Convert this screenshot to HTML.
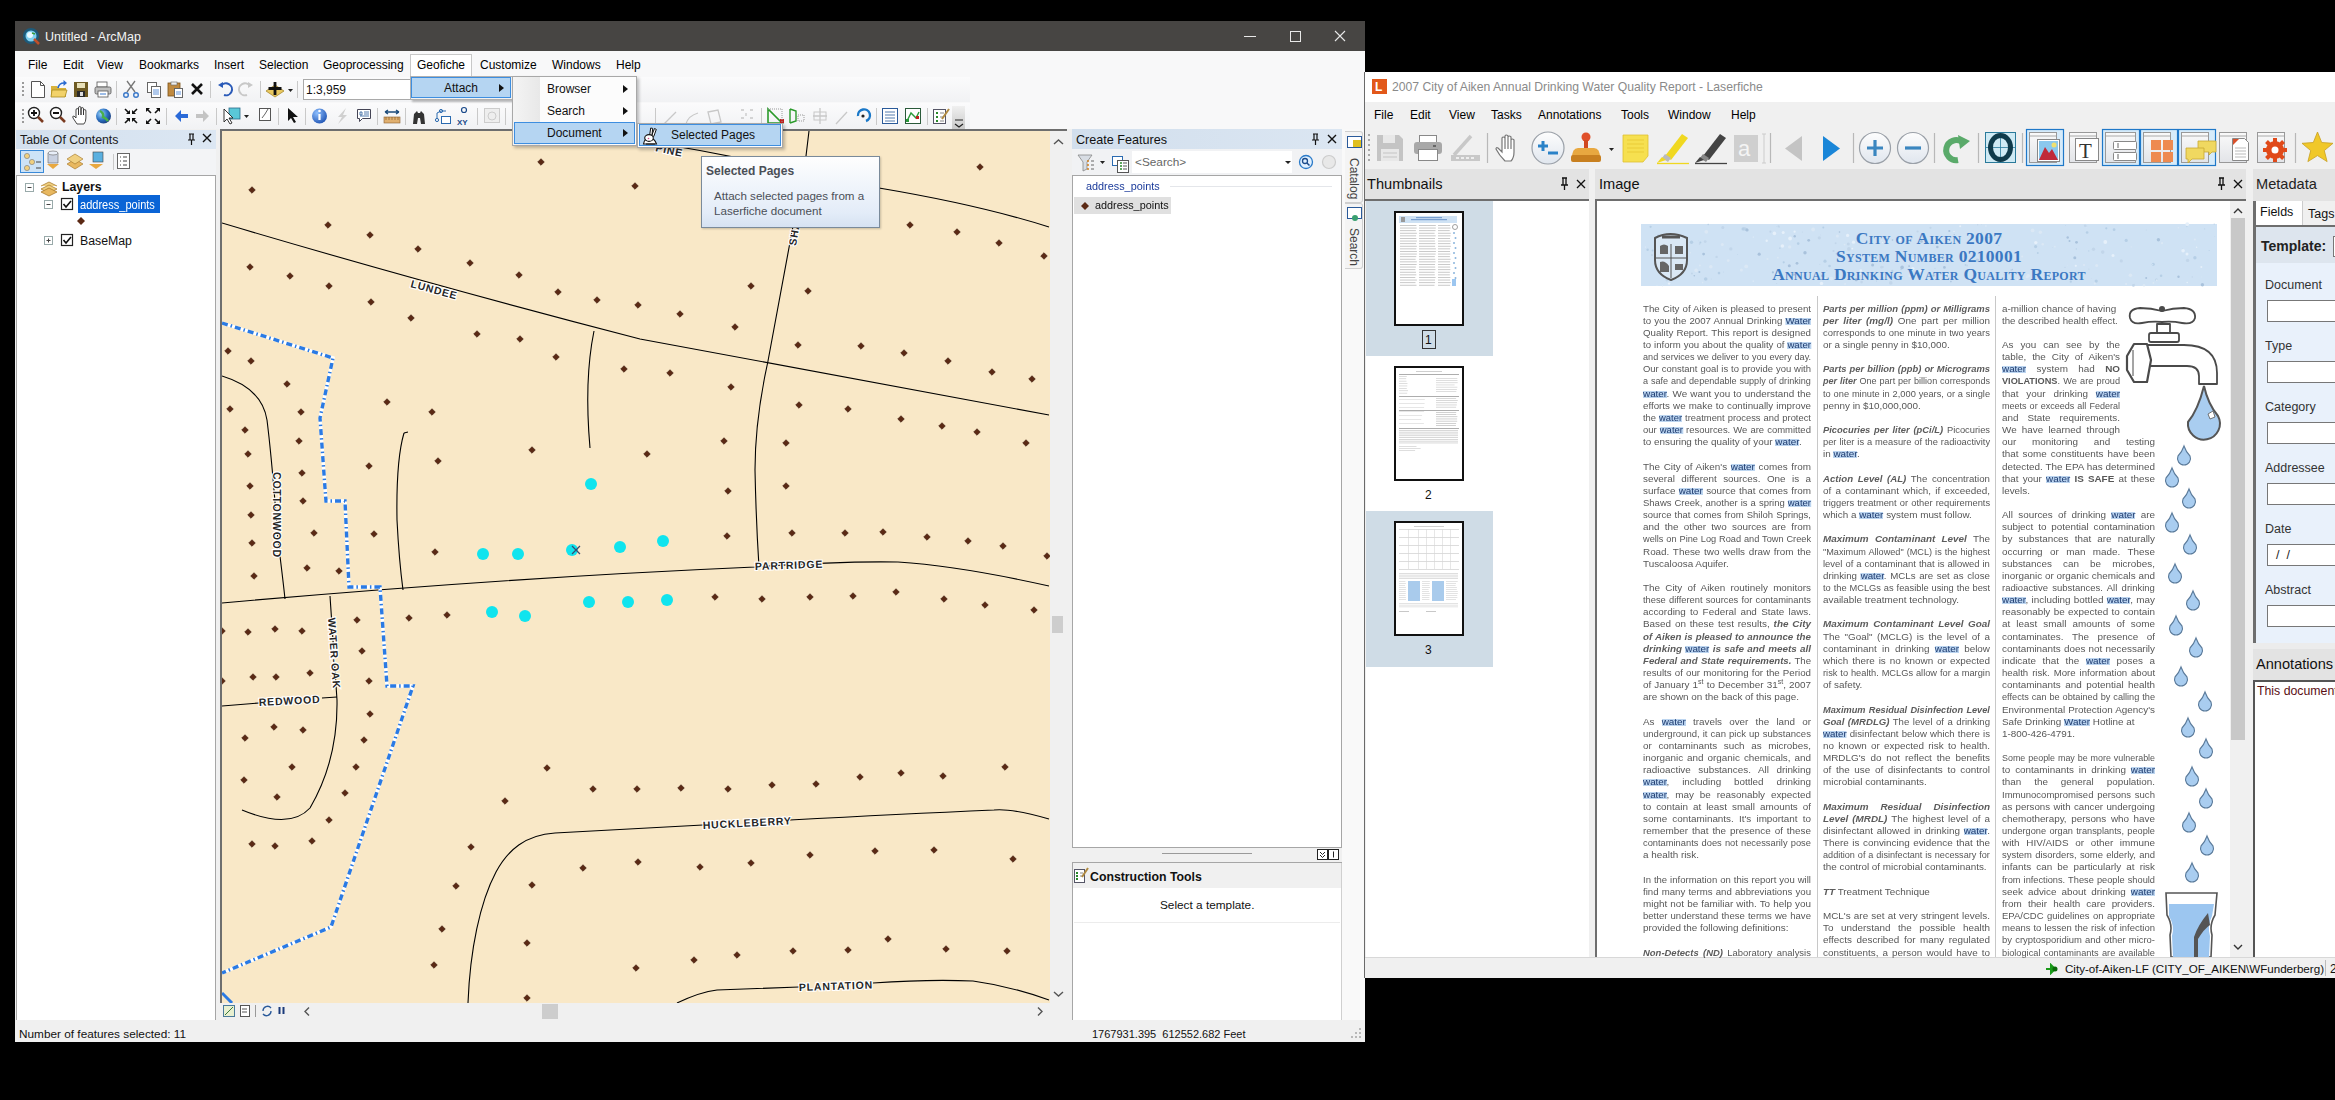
<!DOCTYPE html>
<html><head><meta charset="utf-8">
<style>
*{margin:0;padding:0;box-sizing:border-box}
html,body{width:2335px;height:1100px;overflow:hidden;background:#000;font-family:"Liberation Sans",sans-serif;position:relative}
.a{position:absolute}
.t{position:absolute;white-space:nowrap;font-size:12px;color:#000;line-height:1}
</style></head><body>
<!-- ============ ARCMAP WINDOW ============ -->
<div class="a" style="left:15px;top:21px;width:1350px;height:1021px;background:#f0f0f0"></div>
<div class="a" style="left:15px;top:21px;width:1350px;height:30px;background:#474543"></div>
<svg class="a" style="left:22px;top:27px" width="20" height="20" viewBox="0 0 20 20">
  <circle cx="9" cy="9" r="8" fill="#1d5a7a"/><circle cx="9" cy="9" r="5.5" fill="#7fd0f0"/><circle cx="8" cy="8" r="3" fill="#e8f8ff"/>
  <path d="M12,12 L17,17" stroke="#c0502a" stroke-width="2.5"/><path d="M10,6 l3,1" stroke="#3a9a3a" stroke-width="1.5"/>
</svg>
<div class="t" style="margin-top:1px;left:45px;top:30px;font-size:12.5px;color:#f4f4f4">Untitled - ArcMap</div>
<svg class="a" style="left:1230px;top:26px" width="130" height="20" viewBox="0 0 130 20">
  <path d="M14,10.5 H26" stroke="#e8e8e8" stroke-width="1"/>
  <rect x="60.5" y="5.5" width="10" height="10" fill="none" stroke="#e8e8e8" stroke-width="1"/>
  <path d="M105,5 L115,15 M115,5 L105,15" stroke="#e8e8e8" stroke-width="1.1"/>
</svg>
<!-- menu bar -->
<div class="a" style="left:15px;top:51px;width:1350px;height:25px;background:#f8f8f9"></div>
<div class="a" style="left:410px;top:54px;width:62px;height:23px;background:#fff;border:1px solid #c8c8c8;border-bottom:none"></div>
<div class="t" style="margin-top:1px;left:28px;top:58px">File</div>
<div class="t" style="margin-top:1px;left:63px;top:58px">Edit</div>
<div class="t" style="margin-top:1px;left:97px;top:58px">View</div>
<div class="t" style="margin-top:1px;left:139px;top:58px">Bookmarks</div>
<div class="t" style="margin-top:1px;left:214px;top:58px">Insert</div>
<div class="t" style="margin-top:1px;left:259px;top:58px">Selection</div>
<div class="t" style="margin-top:1px;left:323px;top:58px">Geoprocessing</div>
<div class="t" style="margin-top:1px;left:417px;top:58px">Geofiche</div>
<div class="t" style="margin-top:1px;left:480px;top:58px">Customize</div>
<div class="t" style="margin-top:1px;left:552px;top:58px">Windows</div>
<div class="t" style="margin-top:1px;left:616px;top:58px">Help</div>
<!-- toolbars -->
<div class="a" style="left:15px;top:76px;width:1350px;height:53px;background:#f8f8f9"></div><div class="a" style="left:15px;top:77px;width:955px;height:25px;background:linear-gradient(#fbfbfc,#f1f2f4)"></div><div class="a" style="left:15px;top:103px;width:955px;height:26px;background:linear-gradient(#fbfbfc,#f1f2f4)"></div>
<div class="a" style="left:303px;top:79px;width:110px;height:21px;background:#fff;border:1px solid #a9a9a9"></div>
<div class="t" style="margin-top:1px;left:306px;top:83px;font-size:12px;color:#111">1:3,959</div>
<div class="a" style="left:952px;top:106px;width:13px;height:24px;background:linear-gradient(#f0f0f0,#c8c8c8)"></div>

<div class="a" style="left:220px;top:129px;width:831px;height:875px;background:#f9e8c7;border-left:2px solid #6e6e6e;border-top:2px solid #6e6e6e"></div>
<!-- MAPSVG --><svg class="a" style="left:222px;top:131px" width="828" height="872" viewBox="222 131 828 872">
<g fill="none" stroke="#000" stroke-width="1.1">
<path d="M222,223 Q420,282 640,339 Q760,361 1049,415"/>
<path d="M594,331 Q584,380 590,448"/>
<path d="M809,131 L806,156 Q790,240 768,361 Q755,420 755,470 Q756,520 759,567"/>
<path d="M640,140 Q760,160 879,188 Q980,205 1049,227"/>
<path d="M222,603 Q500,578 755,567 Q840,561 898,562 Q960,566 1049,586"/>
<path d="M222,376 Q262,388 267,420 Q272,460 278,540 Q283,580 285,599"/>
<path d="M404,433 L408,432 M404,433 Q396,460 397,520 Q399,560 403,590"/>
<path d="M330,596 L337,700 Q338,760 310,808 Q290,830 242,810"/>
<path d="M222,706 L259,703 M322,698 L337,697"/>
<path d="M1049,819 Q1010,808 994,810 Q900,814 790,820 M703,825 L555,833 C525,835 508,850 496,872 C480,902 470,950 468,1003"/>
<path d="M677,1003 Q700,992 717,990 L799,987 M873,983 Q930,979 973,981 Q1010,986 1049,1000"/>
</g>
<g fill="none">
<path d="M222,323 L333,358 L320,418 L325,488 L326,501 L345,501 L349,587 L380,587 L387,686 L413,686 L331,927 L222,973" stroke="#fff" stroke-width="3.4"/>
<path d="M222,323 L333,358 L320,418 L325,488 L326,501 L345,501 L349,587 L380,587 L387,686 L413,686 L331,927 L222,973" stroke="#2a7ae4" stroke-width="3.4" stroke-dasharray="6 3 1.5 3"/>
<path d="M222,993 L232,1003" stroke="#2a7ae4" stroke-width="3"/>
</g>
<path d="M252,186.7l3.3,3.3l-3.3,3.3l-3.3,-3.3zM541,158.7l3.3,3.3l-3.3,3.3l-3.3,-3.3zM635,182.7l3.3,3.3l-3.3,3.3l-3.3,-3.3zM328,221.7l3.3,3.3l-3.3,3.3l-3.3,-3.3zM370,231.7l3.3,3.3l-3.3,3.3l-3.3,-3.3zM418,245.7l3.3,3.3l-3.3,3.3l-3.3,-3.3zM470,259.7l3.3,3.3l-3.3,3.3l-3.3,-3.3zM519,271.7l3.3,3.3l-3.3,3.3l-3.3,-3.3zM250,263.7l3.3,3.3l-3.3,3.3l-3.3,-3.3zM290,272.7l3.3,3.3l-3.3,3.3l-3.3,-3.3zM329,282.7l3.3,3.3l-3.3,3.3l-3.3,-3.3zM371,298.7l3.3,3.3l-3.3,3.3l-3.3,-3.3zM411,314.7l3.3,3.3l-3.3,3.3l-3.3,-3.3zM558,288.7l3.3,3.3l-3.3,3.3l-3.3,-3.3zM597,296.7l3.3,3.3l-3.3,3.3l-3.3,-3.3zM638,301.7l3.3,3.3l-3.3,3.3l-3.3,-3.3zM477,330.7l3.3,3.3l-3.3,3.3l-3.3,-3.3zM520,335.7l3.3,3.3l-3.3,3.3l-3.3,-3.3zM556,353.7l3.3,3.3l-3.3,3.3l-3.3,-3.3zM624,365.7l3.3,3.3l-3.3,3.3l-3.3,-3.3zM228,347.7l3.3,3.3l-3.3,3.3l-3.3,-3.3zM251,357.7l3.3,3.3l-3.3,3.3l-3.3,-3.3zM287,380.7l3.3,3.3l-3.3,3.3l-3.3,-3.3zM230,405.7l3.3,3.3l-3.3,3.3l-3.3,-3.3zM301,408.7l3.3,3.3l-3.3,3.3l-3.3,-3.3zM387,398.7l3.3,3.3l-3.3,3.3l-3.3,-3.3zM432,408.7l3.3,3.3l-3.3,3.3l-3.3,-3.3zM980,163.7l3.3,3.3l-3.3,3.3l-3.3,-3.3zM910,221.7l3.3,3.3l-3.3,3.3l-3.3,-3.3zM957,228.7l3.3,3.3l-3.3,3.3l-3.3,-3.3zM999,239.7l3.3,3.3l-3.3,3.3l-3.3,-3.3zM1044,252.7l3.3,3.3l-3.3,3.3l-3.3,-3.3zM751,282.7l3.3,3.3l-3.3,3.3l-3.3,-3.3zM808,287.7l3.3,3.3l-3.3,3.3l-3.3,-3.3zM680,310.7l3.3,3.3l-3.3,3.3l-3.3,-3.3zM735,323.7l3.3,3.3l-3.3,3.3l-3.3,-3.3zM798,341.7l3.3,3.3l-3.3,3.3l-3.3,-3.3zM861,342.7l3.3,3.3l-3.3,3.3l-3.3,-3.3zM904,349.7l3.3,3.3l-3.3,3.3l-3.3,-3.3zM948,357.7l3.3,3.3l-3.3,3.3l-3.3,-3.3zM992,368.7l3.3,3.3l-3.3,3.3l-3.3,-3.3zM1032,375.7l3.3,3.3l-3.3,3.3l-3.3,-3.3zM670,369.7l3.3,3.3l-3.3,3.3l-3.3,-3.3zM731,383.7l3.3,3.3l-3.3,3.3l-3.3,-3.3zM799,401.7l3.3,3.3l-3.3,3.3l-3.3,-3.3zM848,405.7l3.3,3.3l-3.3,3.3l-3.3,-3.3zM901,415.7l3.3,3.3l-3.3,3.3l-3.3,-3.3zM245,426.7l3.3,3.3l-3.3,3.3l-3.3,-3.3zM299,437.7l3.3,3.3l-3.3,3.3l-3.3,-3.3zM248,450.7l3.3,3.3l-3.3,3.3l-3.3,-3.3zM369,462.7l3.3,3.3l-3.3,3.3l-3.3,-3.3zM438,457.7l3.3,3.3l-3.3,3.3l-3.3,-3.3zM532,446.7l3.3,3.3l-3.3,3.3l-3.3,-3.3zM302,469.7l3.3,3.3l-3.3,3.3l-3.3,-3.3zM250,482.7l3.3,3.3l-3.3,3.3l-3.3,-3.3zM303,497.7l3.3,3.3l-3.3,3.3l-3.3,-3.3zM251,511.7l3.3,3.3l-3.3,3.3l-3.3,-3.3zM314,529.7l3.3,3.3l-3.3,3.3l-3.3,-3.3zM374,530.7l3.3,3.3l-3.3,3.3l-3.3,-3.3zM252,539.7l3.3,3.3l-3.3,3.3l-3.3,-3.3zM435,548.7l3.3,3.3l-3.3,3.3l-3.3,-3.3zM254,572.7l3.3,3.3l-3.3,3.3l-3.3,-3.3zM307,564.7l3.3,3.3l-3.3,3.3l-3.3,-3.3zM339,567.7l3.3,3.3l-3.3,3.3l-3.3,-3.3zM357,616.7l3.3,3.3l-3.3,3.3l-3.3,-3.3zM409,614.7l3.3,3.3l-3.3,3.3l-3.3,-3.3zM447,611.7l3.3,3.3l-3.3,3.3l-3.3,-3.3zM222,627.7l3.3,3.3l-3.3,3.3l-3.3,-3.3zM248,628.7l3.3,3.3l-3.3,3.3l-3.3,-3.3zM275,625.7l3.3,3.3l-3.3,3.3l-3.3,-3.3zM302,627.7l3.3,3.3l-3.3,3.3l-3.3,-3.3zM362,647.7l3.3,3.3l-3.3,3.3l-3.3,-3.3zM253,673.7l3.3,3.3l-3.3,3.3l-3.3,-3.3zM276,673.7l3.3,3.3l-3.3,3.3l-3.3,-3.3zM310,669.7l3.3,3.3l-3.3,3.3l-3.3,-3.3zM369,677.7l3.3,3.3l-3.3,3.3l-3.3,-3.3zM222,677.7l3.3,3.3l-3.3,3.3l-3.3,-3.3zM942,422.7l3.3,3.3l-3.3,3.3l-3.3,-3.3zM977,428.7l3.3,3.3l-3.3,3.3l-3.3,-3.3zM1026,439.7l3.3,3.3l-3.3,3.3l-3.3,-3.3zM647,450.7l3.3,3.3l-3.3,3.3l-3.3,-3.3zM724,437.7l3.3,3.3l-3.3,3.3l-3.3,-3.3zM786,439.7l3.3,3.3l-3.3,3.3l-3.3,-3.3zM728,487.7l3.3,3.3l-3.3,3.3l-3.3,-3.3zM786,482.7l3.3,3.3l-3.3,3.3l-3.3,-3.3zM727,532.7l3.3,3.3l-3.3,3.3l-3.3,-3.3zM792,529.7l3.3,3.3l-3.3,3.3l-3.3,-3.3zM845,529.7l3.3,3.3l-3.3,3.3l-3.3,-3.3zM883,528.7l3.3,3.3l-3.3,3.3l-3.3,-3.3zM927,533.7l3.3,3.3l-3.3,3.3l-3.3,-3.3zM968,537.7l3.3,3.3l-3.3,3.3l-3.3,-3.3zM1003,542.7l3.3,3.3l-3.3,3.3l-3.3,-3.3zM1047,552.7l3.3,3.3l-3.3,3.3l-3.3,-3.3zM715,593.7l3.3,3.3l-3.3,3.3l-3.3,-3.3zM762,595.7l3.3,3.3l-3.3,3.3l-3.3,-3.3zM810,593.7l3.3,3.3l-3.3,3.3l-3.3,-3.3zM853,592.7l3.3,3.3l-3.3,3.3l-3.3,-3.3zM896,588.7l3.3,3.3l-3.3,3.3l-3.3,-3.3zM944,595.7l3.3,3.3l-3.3,3.3l-3.3,-3.3zM985,601.7l3.3,3.3l-3.3,3.3l-3.3,-3.3zM1034,606.7l3.3,3.3l-3.3,3.3l-3.3,-3.3zM370,710.7l3.3,3.3l-3.3,3.3l-3.3,-3.3zM274,723.7l3.3,3.3l-3.3,3.3l-3.3,-3.3zM303,726.7l3.3,3.3l-3.3,3.3l-3.3,-3.3zM245,734.7l3.3,3.3l-3.3,3.3l-3.3,-3.3zM364,736.7l3.3,3.3l-3.3,3.3l-3.3,-3.3zM292,763.7l3.3,3.3l-3.3,3.3l-3.3,-3.3zM356,763.7l3.3,3.3l-3.3,3.3l-3.3,-3.3zM244,776.7l3.3,3.3l-3.3,3.3l-3.3,-3.3zM277,793.7l3.3,3.3l-3.3,3.3l-3.3,-3.3zM345,789.7l3.3,3.3l-3.3,3.3l-3.3,-3.3zM329,816.7l3.3,3.3l-3.3,3.3l-3.3,-3.3zM252,840.7l3.3,3.3l-3.3,3.3l-3.3,-3.3zM275,842.7l3.3,3.3l-3.3,3.3l-3.3,-3.3zM312,837.7l3.3,3.3l-3.3,3.3l-3.3,-3.3zM547,764.7l3.3,3.3l-3.3,3.3l-3.3,-3.3zM593,785.7l3.3,3.3l-3.3,3.3l-3.3,-3.3zM637,785.7l3.3,3.3l-3.3,3.3l-3.3,-3.3zM505,797.7l3.3,3.3l-3.3,3.3l-3.3,-3.3zM471,843.7l3.3,3.3l-3.3,3.3l-3.3,-3.3zM583,864.7l3.3,3.3l-3.3,3.3l-3.3,-3.3zM638,858.7l3.3,3.3l-3.3,3.3l-3.3,-3.3zM532,881.7l3.3,3.3l-3.3,3.3l-3.3,-3.3zM456,882.7l3.3,3.3l-3.3,3.3l-3.3,-3.3zM442,925.7l3.3,3.3l-3.3,3.3l-3.3,-3.3zM527,939.7l3.3,3.3l-3.3,3.3l-3.3,-3.3zM434,961.7l3.3,3.3l-3.3,3.3l-3.3,-3.3zM636,964.7l3.3,3.3l-3.3,3.3l-3.3,-3.3zM527,994.7l3.3,3.3l-3.3,3.3l-3.3,-3.3zM681,784.7l3.3,3.3l-3.3,3.3l-3.3,-3.3zM728,785.7l3.3,3.3l-3.3,3.3l-3.3,-3.3zM772,781.7l3.3,3.3l-3.3,3.3l-3.3,-3.3zM816,780.7l3.3,3.3l-3.3,3.3l-3.3,-3.3zM860,773.7l3.3,3.3l-3.3,3.3l-3.3,-3.3zM901,769.7l3.3,3.3l-3.3,3.3l-3.3,-3.3zM943,772.7l3.3,3.3l-3.3,3.3l-3.3,-3.3zM1005,763.7l3.3,3.3l-3.3,3.3l-3.3,-3.3zM700,863.7l3.3,3.3l-3.3,3.3l-3.3,-3.3zM751,859.7l3.3,3.3l-3.3,3.3l-3.3,-3.3zM810,851.7l3.3,3.3l-3.3,3.3l-3.3,-3.3zM875,847.7l3.3,3.3l-3.3,3.3l-3.3,-3.3zM934,846.7l3.3,3.3l-3.3,3.3l-3.3,-3.3zM1013,855.7l3.3,3.3l-3.3,3.3l-3.3,-3.3zM694,956.7l3.3,3.3l-3.3,3.3l-3.3,-3.3zM737,951.7l3.3,3.3l-3.3,3.3l-3.3,-3.3zM793,947.7l3.3,3.3l-3.3,3.3l-3.3,-3.3zM848,946.7l3.3,3.3l-3.3,3.3l-3.3,-3.3zM888,935.7l3.3,3.3l-3.3,3.3l-3.3,-3.3zM946,945.7l3.3,3.3l-3.3,3.3l-3.3,-3.3zM1007,947.7l3.3,3.3l-3.3,3.3l-3.3,-3.3z" fill="#5b2914" stroke="#3a1a0c" stroke-width="0.6"/>
<g fill="#10e4ee"><circle cx="591" cy="484" r="6"/><circle cx="483" cy="554" r="6"/><circle cx="518" cy="554" r="6"/><circle cx="572" cy="550" r="6"/><circle cx="620" cy="547" r="6"/><circle cx="663" cy="541" r="6"/><circle cx="492" cy="612" r="6"/><circle cx="525" cy="616" r="6"/><circle cx="589" cy="602" r="6"/><circle cx="628" cy="602" r="6"/><circle cx="667" cy="600" r="6"/></g>

<path d="M572,546 l8,8 m0,-8 l-8,8" stroke="#3a4a70" stroke-width="1.2"/>
<g font-family="Liberation Sans" font-size="10.5" font-weight="bold" fill="#262626" stroke="#fff" stroke-width="2.2" paint-order="stroke" letter-spacing="0.8">
<text transform="translate(410,287) rotate(15)">LUNDEE</text>
<text transform="translate(755,570) rotate(-2)">PARTRIDGE</text>
<text transform="translate(703,829) rotate(-3)">HUCKLEBERRY</text>
<text transform="translate(799,991) rotate(-2)">PLANTATION</text>
<text transform="translate(259,706) rotate(-3)">REDWOOD</text>
<text transform="translate(273,472) rotate(90)">COTTONWOOD</text>
<text transform="translate(328,618) rotate(86)">WATER-OAK</text>
<text transform="translate(796,246) rotate(-80)">SHA</text>
<text transform="translate(655,151) rotate(12)">PINE</text>
</g>
</svg><!-- /MAPSVG -->
<!-- TOC -->
<div class="a" style="left:16px;top:130px;width:200px;height:19px;background:linear-gradient(90deg,#d3e0ee,#dce7f3)"></div>
<div class="t" style="margin-top:1px;left:20px;top:133px;font-size:12.3px;color:#1a1a1a">Table Of Contents</div>
<svg class="a" style="left:184px;top:131px" width="30" height="16" viewBox="0 0 30 16"><path d="M5,3h5M6,3v6M9,3v6M4,9h7M7.5,9v5" stroke="#111" stroke-width="1.2" fill="none"/><path d="M19,3l8,8M27,3l-8,8" stroke="#111" stroke-width="1.4"/></svg>
<div class="a" style="left:16px;top:149px;width:200px;height:26px;background:#f3f4f6"></div>
<div class="a" style="left:16px;top:175px;width:200px;height:846px;background:#fff;border:1px solid #a6a6a6"></div>
<svg class="a" style="left:20px;top:178px" width="120" height="70" viewBox="0 0 120 70">
 <rect x="5.5" y="5.5" width="8" height="8" fill="#fff" stroke="#9aa"/><path d="M7.5,9.5h4" stroke="#444"/>
 <path d="M21,11l8,-4l8,4l-8,4z M21,8l8,-4l8,4" fill="#f0d080" stroke="#a07020" stroke-width="0.7"/><path d="M21,14l8,-4l8,4l-8,4z" fill="#e8b860" stroke="#a07020" stroke-width="0.7"/>
 <rect x="24.5" y="22.5" width="8" height="8" fill="#fff" stroke="#9aa"/><path d="M26.5,26.5h4" stroke="#444"/>
 <rect x="41.5" y="20.5" width="11" height="11" fill="#fff" stroke="#222" stroke-width="1.2"/><path d="M43.5,26l2.5,3l5,-6" stroke="#111" stroke-width="1.6" fill="none"/>
 <path d="M61,39l4,4l-4,4l-4,-4z" fill="#5b2914"/>
 <rect x="24.5" y="58.5" width="8" height="8" fill="#fff" stroke="#9aa"/><path d="M26.5,62.5h4M28.5,60.5v4" stroke="#444"/>
 <rect x="41.5" y="56.5" width="11" height="11" fill="#fff" stroke="#222" stroke-width="1.2"/><path d="M43.5,62l2.5,3l5,-6" stroke="#111" stroke-width="1.6" fill="none"/>
</svg>
<div class="t" style="margin-top:1px;left:62px;top:180px;font-size:12.3px;font-weight:bold;color:#111">Layers</div>
<div class="a" style="left:78px;top:195px;width:82px;height:18px;background:#0a64d6"></div>
<div class="t" style="margin-top:1px;left:80px;top:198px;font-size:12px;color:#fff;transform:scaleX(0.92);transform-origin:0 0">address_points</div>
<div class="t" style="margin-top:1px;left:80px;top:234px;font-size:12.3px;color:#111">BaseMap</div>

<!-- map scrollbars -->
<div class="a" style="left:1050px;top:129px;width:17px;height:875px;background:#f0f0f0;border-top:2px solid #6e6e6e"></div>
<div class="a" style="left:1052px;top:616px;width:11px;height:17px;background:#cdcdcd"></div>
<svg class="a" style="left:1050px;top:132px" width="17" height="872" viewBox="0 0 17 872"><path d="M4,12l4.5,-4l4.5,4" fill="none" stroke="#555" stroke-width="1.4"/><path d="M4,860l4.5,4l4.5,-4" fill="none" stroke="#555" stroke-width="1.4"/></svg>
<div class="a" style="left:220px;top:1003px;width:847px;height:17px;background:#f0f0f0"></div>
<div class="a" style="left:542px;top:1004px;width:16px;height:15px;background:#cdcdcd"></div>
<svg class="a" style="left:220px;top:1003px" width="847" height="17" viewBox="0 0 847 17">
 <rect x="3.5" y="2.5" width="11" height="11" fill="#e8f0d0" stroke="#4a7a9a"/><path d="M5,12l8,-8" stroke="#3a7a3a"/>
 <rect x="20.5" y="2.5" width="9" height="11" fill="#fff" stroke="#555"/><path d="M22,6h5M22,9h5" stroke="#555"/>
 <path d="M35.5,2V14" stroke="#999"/>
 <path d="M43,8a4.5,4.5 0 0 1 8,-3 M51,8a4.5,4.5 0 0 1 -8,3" fill="none" stroke="#2a5a9a" stroke-width="1.3"/>
 <path d="M59.5,4v7M63.5,4v7" stroke="#1a3a7a" stroke-width="2"/>
 <path d="M89,4.5l-4,4l4,4" fill="none" stroke="#555" stroke-width="1.4"/>
 <path d="M818,4.5l4,4l-4,4" fill="none" stroke="#555" stroke-width="1.4"/>
</svg>

<!-- status bar -->
<div class="a" style="left:15px;top:1020px;width:1350px;height:22px;background:#f0f0f0"></div>
<div class="t" style="margin-top:1px;left:19px;top:1028px;font-size:11.8px;color:#111">Number of features selected: 11</div>
<div class="t" style="margin-top:1px;left:1092px;top:1028px;font-size:11px;color:#111">1767931.395&nbsp; 612552.682 Feet</div>

<!-- Create features -->
<div class="a" style="left:1072px;top:129px;width:270px;height:20px;background:linear-gradient(90deg,#d2dfed,#dbe6f2)"></div>
<div class="t" style="margin-top:1px;left:1076px;top:133px;font-size:12.6px;color:#111">Create Features</div>
<svg class="a" style="left:1308px;top:131px" width="34" height="16" viewBox="0 0 34 16"><path d="M5,3h5M6,3v6M9,3v6M4,9h7M7.5,9v5" stroke="#111" stroke-width="1.2" fill="none"/><path d="M20,4l8,8M28,4l-8,8" stroke="#111" stroke-width="1.4"/></svg>
<div class="a" style="left:1072px;top:149px;width:270px;height:27px;background:#f1f2f4"></div>
<div class="a" style="left:1132px;top:151px;width:160px;height:22px;background:#fff"></div>
<svg class="a" style="left:1072px;top:149px" width="270" height="27" viewBox="0 0 270 27">
 <path d="M6,6h14l-5,7v7l-4,2v-9z" fill="#d8dde4" stroke="#888" stroke-width="0.8"/><path d="M15,12h2M15,16h2M15,20h2" stroke="#d08020" stroke-width="1.5"/><path d="M19,12h3M19,16h3M19,20h3" stroke="#666"/>
 <path d="M28,12h5l-2.5,3z" fill="#222"/>
 <rect x="40.5" y="7.5" width="10" height="9" fill="#fff" stroke="#2a6ab0"/><rect x="45.5" y="11.5" width="11" height="12" fill="#fff" stroke="#555"/><path d="M48,14h2M48,17h2M48,20h2" stroke="#2a8a2a" stroke-width="1.3"/><path d="M51,14h4M51,17h4M51,20h4" stroke="#555"/>
 <path d="M213,12h6l-3,3z" fill="#222"/>
 <circle cx="234" cy="13" r="6.5" fill="#e0f0ff" stroke="#2a7ac8" stroke-width="1.3"/><circle cx="233" cy="12" r="2.5" fill="none" stroke="#1a4a8a" stroke-width="1.3"/><path d="M235,14l2.5,2.5" stroke="#1a4a8a" stroke-width="1.5"/>
 <circle cx="257" cy="13" r="6.5" fill="#e8e8e8" stroke="#ccc" stroke-width="1.2"/>
</svg>
<div class="t" style="margin-top:1px;left:1135px;top:156px;font-size:11.8px;color:#666">&lt;Search&gt;</div>
<div class="a" style="left:1072px;top:175px;width:270px;height:673px;background:#fff;border:1px solid #a6a6a6"></div>
<div class="t" style="margin-top:1px;left:1086px;top:180px;font-size:11.8px;color:#1a3a9a;transform:scaleX(0.92);transform-origin:0 0">address_points</div>
<div class="a" style="left:1170px;top:186px;width:162px;height:1px;background:#e4e6ea"></div>
<div class="a" style="left:1074px;top:197px;width:97px;height:17px;background:#e0e0e0"></div>
<svg class="a" style="left:1080px;top:201px" width="10" height="10" viewBox="0 0 10 10"><path d="M5,1l4,4l-4,4l-4,-4z" fill="#5b2914"/></svg>
<div class="t" style="margin-top:1px;left:1095px;top:199px;font-size:11.8px;color:#111;transform:scaleX(0.92);transform-origin:0 0">address_points</div>
<!-- splitter -->
<div class="a" style="left:1072px;top:848px;width:270px;height:18px;background:#f0f0f0"></div>
<div class="a" style="left:1162px;top:853px;width:90px;height:1px;background:#9a9a9a"></div>
<svg class="a" style="left:1316px;top:847px" width="26" height="14" viewBox="0 0 26 14"><rect x="1.5" y="2.5" width="10" height="10" fill="#fff" stroke="#222"/><path d="M4,5l2.5,2.5l2.5,-2.5M4,8l2.5,2.5l2.5,-2.5" fill="none" stroke="#222"/><rect x="12.5" y="2.5" width="10" height="10" fill="#fff" stroke="#222"/><path d="M17.5,4.5v6" stroke="#222"/></svg>
<div class="a" style="left:1072px;top:862px;width:270px;height:158px;background:#fff;border-left:1px solid #a6a6a6;border-right:1px solid #d0d0d0"></div>
<div class="a" style="left:1072px;top:862px;width:270px;height:1px;background:#a6a6a6"></div><div class="a" style="left:1073px;top:863px;width:268px;height:25px;background:#f0f0f0"></div>
<svg class="a" style="left:1073px;top:866px" width="16" height="18" viewBox="0 0 16 18"><rect x="1.5" y="3.5" width="10" height="13" fill="#fff" stroke="#556"/><path d="M3,7h2M3,10h2M3,13h2" stroke="#2a8a2a" stroke-width="2"/><path d="M7,7h3M7,10h3" stroke="#888"/><path d="M9,11l6,-9" stroke="#b08a40" stroke-width="2"/></svg>
<div class="t" style="margin-top:1px;left:1090px;top:870px;font-size:12.3px;font-weight:bold;color:#111">Construction Tools</div>
<div class="a" style="left:1074px;top:922px;width:266px;height:1px;background:#ececec"></div>
<div class="t" style="margin-top:1px;left:1160px;top:899px;font-size:11.8px;color:#111">Select a template.</div>
<!-- side tabs -->
<div class="a" style="left:1342px;top:129px;width:23px;height:891px;background:#f9f9f9"></div>
<div class="a" style="left:1345px;top:131px;width:18px;height:72px;background:#f4f4f4;border:1px solid #cfcfcf;border-left:none;border-radius:0 3px 3px 0"></div>
<div class="a" style="left:1345px;top:203px;width:18px;height:66px;background:#f4f4f4;border:1px solid #cfcfcf;border-left:none;border-radius:0 3px 3px 0"></div>
<svg class="a" style="left:1345px;top:131px" width="20" height="140" viewBox="0 0 20 140">
 <rect x="2.5" y="5.5" width="14" height="11" fill="#fff" stroke="#2a5a9a"/><rect x="8" y="9" width="8" height="7" fill="#e0c020"/>
 <text transform="translate(5,27) rotate(90)" font-family="Liberation Sans" font-size="12" fill="#444">Catalog</text>
 <rect x="2.5" y="76.5" width="14" height="11" fill="#fff" stroke="#2a5a9a"/><circle cx="10" cy="87" r="3" fill="#3aa070"/>
 <text transform="translate(5,97) rotate(90)" font-family="Liberation Sans" font-size="12" fill="#444">Search</text>
</svg>

<svg class="a" style="left:1350px;top:1027px" width="12" height="12" viewBox="0 0 12 12"><g fill="#b8b8b8"><rect x="9" y="1" width="2" height="2"/><rect x="5" y="5" width="2" height="2"/><rect x="9" y="5" width="2" height="2"/><rect x="1" y="9" width="2" height="2"/><rect x="5" y="9" width="2" height="2"/><rect x="9" y="9" width="2" height="2"/></g></svg>

<svg class="a" style="left:0;top:0" width="1070" height="180" viewBox="0 0 1070 180">
<defs>
 <radialGradient id="glb" cx="0.35" cy="0.35" r="0.7"><stop offset="0" stop-color="#9fd6ff"/><stop offset="0.6" stop-color="#2a6fc0"/><stop offset="1" stop-color="#1a3f80"/></radialGradient>
 <radialGradient id="inf" cx="0.35" cy="0.3" r="0.8"><stop offset="0" stop-color="#8fc0ff"/><stop offset="1" stop-color="#1a4fb0"/></radialGradient>
</defs>
<!-- grips -->
<g fill="#9a9a9a"><rect x="22" y="82" width="2" height="2"/><rect x="22" y="86" width="2" height="2"/><rect x="22" y="90" width="2" height="2"/><rect x="22" y="94" width="2" height="2"/>
<rect x="22" y="109" width="2" height="2"/><rect x="22" y="113" width="2" height="2"/><rect x="22" y="117" width="2" height="2"/><rect x="22" y="121" width="2" height="2"/></g>
<!-- separators -->
<g stroke="#c9c9c9" stroke-width="1">
<path d="M116.5,81V98 M210.5,81V98 M260.5,81V98 M297.5,81V98"/>
<path d="M116.5,108V125 M166.5,108V125 M216.5,108V125 M278.5,108V125 M305.5,108V125 M377.5,108V125 M405.5,108V125 M477.5,108V125 M505.5,108V125 M655.5,108V125 M761.5,108V125 M876.5,108V125 M927.5,108V125"/>
</g>
<!-- ROW 1 -->
<path d="M31.5,81.5h9l4,4v12h-13z" fill="#fff" stroke="#555" stroke-width="1"/><path d="M40.5,81.5v4h4" fill="none" stroke="#555"/>
<path d="M51,86h6l2,2h7v9h-15z" fill="#d8b23a"/><path d="M52,90h15l-2,7h-14z" fill="#f2d26a" stroke="#a88a20" stroke-width="0.8"/><path d="M58,88q1,-5 6,-5" fill="none" stroke="#2a6ad0" stroke-width="1.6"/><path d="M67,83l-3.5,-3v6z" fill="#2a6ad0"/>
<rect x="74" y="82" width="14" height="15" fill="#6e5a22"/><rect x="77" y="83" width="8" height="5" fill="#e8e0b8"/><rect x="77" y="91" width="8" height="6" fill="#2a2a2a"/><rect x="80" y="92" width="3" height="4" fill="#ddd"/>
<rect x="97" y="82" width="10" height="5" fill="#fff" stroke="#555" stroke-width="0.8"/><rect x="95" y="87" width="16" height="7" rx="1.5" fill="#bfbfbf" stroke="#555" stroke-width="0.8"/><rect x="98" y="91" width="10" height="6" fill="#fff" stroke="#555" stroke-width="0.8"/><path d="M100,94h6" stroke="#3a7ad0"/>
<path d="M127,81l8,11 M135,81l-8,11" stroke="#777" stroke-width="1.3"/><circle cx="126" cy="95" r="2.3" fill="none" stroke="#3a78c8" stroke-width="1.4"/><circle cx="136" cy="95" r="2.3" fill="none" stroke="#3a78c8" stroke-width="1.4"/>
<rect x="147.5" y="82.5" width="9" height="10" fill="#fff" stroke="#666"/><rect x="151.5" y="86.5" width="9" height="11" fill="#fff" stroke="#666"/><path d="M153,90h6M153,92h6M153,94h6" stroke="#3a7ad0" stroke-width="0.8"/>
<rect x="168" y="83" width="12" height="13" fill="#c08a40" stroke="#7a5018" stroke-width="0.8"/><rect x="171" y="82" width="6" height="3" fill="#eee" stroke="#666" stroke-width="0.6"/><rect x="174.5" y="88.5" width="8" height="9" fill="#fff" stroke="#666"/><path d="M176,92h5M176,94h5" stroke="#3a7ad0" stroke-width="0.8"/>
<path d="M192,84l10,10 M202,84l-10,10" stroke="#111" stroke-width="2.6"/>
<path d="M221,86 a6,6 0 1 1 3,9" fill="none" stroke="#2a5ab8" stroke-width="2"/><path d="M218,85l5,-3l0,6z" fill="#2a5ab8"/>
<path d="M250,86 a6,6 0 1 0 -3,9" fill="none" stroke="#c8c8c8" stroke-width="2"/><path d="M253,85l-5,-3l0,6z" fill="#c8c8c8"/>
<path d="M266,91l9,-6l9,6l-9,6z" fill="#e9c860" stroke="#a88a30" stroke-width="0.8"/><path d="M275,82v13 M268.5,88.5h13" stroke="#111" stroke-width="2.8"/><path d="M288,89h5l-2.5,3z" fill="#222"/>
<!-- ROW 2 -->
<g fill="#fff" stroke="#222" stroke-width="1.4"><circle cx="34" cy="113" r="5.5"/><circle cx="56" cy="113" r="5.5"/></g>
<path d="M38,117l5,5 M60,117l5,5" stroke="#7a3a20" stroke-width="2.6"/>
<path d="M31,113h6M34,110v6 M53,113h6" stroke="#111" stroke-width="1.8"/>
<path d="M77,124 l-4,-6 q-1,-2 1,-2 l2,2 v-8 q0,-1.5 1.3,-1.5 q1.2,0 1.2,1.5 v5 v-7 q0,-1.5 1.3,-1.5 q1.2,0 1.2,1.5 v7 v-6 q0,-1.5 1.3,-1.5 q1.2,0 1.2,1.5 v6 v-4 q0,-1.5 1.2,-1.5 q1.2,0 1.2,1.5 v7 q0,4 -2,6z" fill="#fff" stroke="#333" stroke-width="0.9"/>
<circle cx="103.5" cy="116" r="7.5" fill="url(#glb)"/><path d="M100,111 q4,2 3,6 q3,1 5,4" fill="none" stroke="#4ab04a" stroke-width="2.5"/>
<g stroke="#111" stroke-width="1.6"><path d="M125,109l4,4 M137,109l-4,4 M125,123l4,-4 M137,123l-4,-4"/><path d="M147,109l4,4 M159,109l-4,4 M147,123l4,-4 M159,123l-4,-4"/></g>
<g fill="#111"><path d="M130,114v-4l-4,4z M132,114v-4l4,4z M130,118v4l-4,-4z M132,118v4l4,-4z"/><path d="M146,108h4l-4,4z M160,108h-4l4,4z M146,124h4l-4,-4z M160,124h-4l4,-4z"/></g>
<path d="M175,116l6,-6v4h7v4h-7v4z" fill="#2a6ad8"/><path d="M209,116l-6,-6v4h-7v4h7v4z" fill="#c4c4c4"/>
<rect x="229" y="108" width="11" height="11" fill="#5ac8d8" stroke="#2a6a8a" stroke-width="0.8"/><path d="M224,109l0,13l3,-3l3,5l2,-1l-3,-5h4z" fill="#fff" stroke="#222" stroke-width="0.9"/><path d="M244,115h5l-2.5,3z" fill="#222"/>
<rect x="259.5" y="108.5" width="11" height="12" fill="#fff" stroke="#555"/><path d="M262,118l3,-4l3,-5" stroke="#666" fill="none"/>
<path d="M288,108l0,13l3,-3l3,5l2,-1l-3,-5h5z" fill="#111"/>
<circle cx="319.5" cy="116" r="7.5" fill="url(#inf)"/><path d="M319.5,114v6" stroke="#fff" stroke-width="2.2"/><circle cx="319.5" cy="111" r="1.3" fill="#fff"/>
<path d="M346,108l-8,9h4l-4,7l9,-9h-4z" fill="#d0d0d0"/>
<path d="M357.5,109.5h13v9h-8l-3,3v-3h-2z" fill="#fff" stroke="#445" stroke-width="1"/><path d="M360,112h2v3h-2z M364,112h5 M364,114h5 M360,116h9" stroke="#2a5a9a" stroke-width="0.8" fill="none"/>
<rect x="384" y="117" width="16" height="6" fill="#e0b070" stroke="#8a6030" stroke-width="0.6"/><path d="M386,117v3 M389,117v3 M392,117v3 M395,117v3 M398,117v3" stroke="#7a5020" stroke-width="0.6"/><path d="M385,112h14 M385,112l3,-2 M385,112l3,2 M399,112l-3,-2 M399,112l-3,2" stroke="#1a4a7a" stroke-width="1.4"/>
<path d="M413,124l1,-10l3,-3l1,2h2l1,-2l3,3l1,10h-4l-1,-6h-2l-1,6z" fill="#333"/>
<circle cx="437" cy="120" r="1.6" fill="none" stroke="#2a6ab0"/><circle cx="441" cy="111" r="1.6" fill="none" stroke="#2a6ab0"/><path d="M437,118v-5l4,-2h5" fill="none" stroke="#2a6ab0"/><rect x="441.5" y="116.5" width="9" height="7" fill="#fff" stroke="#2a6ab0"/>
<circle cx="464" cy="110" r="2.5" fill="none" stroke="#1a4a8a" stroke-width="1.2"/><text x="457" y="125" font-size="8" font-weight="bold" fill="#1a4a8a" font-family="Liberation Sans">XY</text>
<rect x="484.5" y="108.5" width="15" height="14" fill="#eee" stroke="#ccc"/><circle cx="492" cy="116" r="4" fill="none" stroke="#ccc"/>
<!-- editor toolbar -->
<path d="M664,124l12,-12 M686,124q2,-8 12,-11 M708,112l10,-2l3,12l-10,2z M741,110h3 M750,110h3 M741,118h3 M750,118h3 M746,113v3" stroke="#c8c8c8" stroke-width="1.3" fill="none"/>
<path d="M768,109l0,14h14z" fill="none" stroke="#2a9a2a" stroke-width="1.6"/><rect x="780" y="119" width="4" height="4" fill="#c02020"/><path d="M768,109h14v14" stroke="#999" stroke-dasharray="1 1" fill="none"/>
<path d="M790,109v14 M790,109l6,2v10l-6,2" stroke="#2a9a2a" stroke-width="1.4" fill="none"/><path d="M798,115h6v6h-6z" fill="none" stroke="#999" stroke-dasharray="1 1"/>
<path d="M813,116h14 M820,108v16" stroke="#c8c8c8" stroke-width="1.3"/><rect x="814" y="112" width="12" height="8" fill="none" stroke="#c8c8c8"/>
<path d="M836,124l11,-12" stroke="#c8c8c8" stroke-width="1.3"/>
<path d="M858,116a6,6 0 1 1 8,5" fill="none" stroke="#1a78c8" stroke-width="2.4"/><circle cx="863" cy="116" r="1.6" fill="#222"/>
<rect x="882.5" y="108.5" width="15" height="15" fill="#fff" stroke="#2a5a9a"/><path d="M885,112h10M885,115h10M885,118h10M885,121h10" stroke="#2a5a9a" stroke-width="0.8"/>
<rect x="905.5" y="108.5" width="15" height="15" fill="#fff" stroke="#2a5a3a"/><path d="M907,121l4,-8l5,5l3,-6" stroke="#2a9a3a" fill="none" stroke-width="1.4"/><rect x="906" y="119" width="3" height="3" fill="#2a9a3a"/><rect x="916" y="116" width="3" height="3" fill="#c02020"/>
<rect x="933.5" y="109.5" width="12" height="14" fill="#fff" stroke="#556"/><path d="M936,113h2M936,117h2M936,121h2" stroke="#2a8a2a" stroke-width="2"/><path d="M940,113h4M940,117h4M940,121h4" stroke="#888"/><path d="M942,119l7,-10" stroke="#b08a40" stroke-width="2"/>
<path d="M955,120h8 M955,124l4,3l4,-3" stroke="#222" stroke-width="1.2" fill="none"/>
<!-- TOC toolbar -->
<rect x="20.5" y="150.5" width="23" height="22" fill="#cde3f7" stroke="#3a8ad8"/>
<circle cx="27" cy="156" r="2.6" fill="#f0d080" stroke="#777" stroke-width="0.6"/><circle cx="32" cy="162" r="2.6" fill="#f0d080" stroke="#777" stroke-width="0.6"/><circle cx="27" cy="168" r="2.6" fill="#f0d080" stroke="#777" stroke-width="0.6"/><path d="M36,162h5M36,168h5" stroke="#444"/>
<path d="M48,153h10v10h-10z" fill="#c8d0e0" stroke="#666" stroke-width="0.6"/><ellipse cx="53" cy="153" rx="5" ry="2" fill="#e8eef8" stroke="#666" stroke-width="0.6"/><path d="M47,164l6,5l6,-5z" fill="#e8a840"/>
<path d="M67,164l8,-5l8,5l-8,5z" fill="#e8b860" stroke="#a07020" stroke-width="0.6"/><path d="M67,159l8,-5l8,5l-8,5z" fill="#f0d080" stroke="#a07020" stroke-width="0.6"/>
<rect x="93" y="152" width="10" height="10" fill="#5ab0e0" stroke="#444" stroke-width="0.6"/><path d="M89,164l7,5l7,-5z" fill="#e8a840"/>
<path d="M113.5,154V170" stroke="#c9c9c9"/>
<rect x="117.5" y="153.5" width="12" height="15" fill="#fff" stroke="#666"/><path d="M120,157h1M123,157h4M120,161h1M123,161h4M120,165h1M123,165h4" stroke="#444"/>
</svg>

<!-- Geofiche dropdown -->
<div class="a" style="left:410px;top:76px;width:103px;height:24px;background:#f2f2f2;border:1px solid #b0b0b0;box-shadow:2px 2px 2px rgba(0,0,0,0.25)"></div>
<div class="a" style="left:411px;top:77px;width:100px;height:21px;background:#b5d5f2;border:1px solid #3d8ee0"></div>
<div class="t" style="margin-top:1px;left:444px;top:81px;font-size:12px;color:#111">Attach</div>
<svg class="a" style="left:498px;top:83px" width="8" height="10"><path d="M1,1l5,4l-5,4z" fill="#111"/></svg>
<!-- submenu -->
<div class="a" style="left:512px;top:76px;width:125px;height:70px;background:#fcfcfc;border:1px solid #a8a8a8;box-shadow:2px 2px 3px rgba(0,0,0,0.25)"></div>
<div class="a" style="left:513px;top:77px;width:27px;height:68px;background:linear-gradient(90deg,#f4f4f4,#e8e8e8)"></div>
<div class="t" style="margin-top:1px;left:547px;top:82px;font-size:12px;color:#111">Browser</div>
<div class="t" style="margin-top:1px;left:547px;top:104px;font-size:12px;color:#111">Search</div>
<div class="a" style="left:514px;top:122px;width:121px;height:22px;background:#b5d5f2;border:1px solid #3d8ee0"></div>
<div class="t" style="margin-top:1px;left:547px;top:126px;font-size:12px;color:#111">Document</div>
<svg class="a" style="left:622px;top:84px" width="8" height="60"><path d="M1,1l5,4l-5,4z M1,23l5,4l-5,4z M1,45l5,4l-5,4z" fill="#111"/></svg>
<!-- sub-submenu -->
<div class="a" style="left:637px;top:123px;width:146px;height:25px;background:#fcfcfc;border:1px solid #a8a8a8;box-shadow:2px 2px 3px rgba(0,0,0,0.25)"></div>
<div class="a" style="left:639px;top:124px;width:142px;height:22px;background:#b5d5f2;border:1px solid #3d8ee0"></div>
<svg class="a" style="left:642px;top:126px" width="16" height="19" viewBox="0 0 16 19"><path d="M1.5,18 q1,-6 6,-6 q5,0 7,6z" fill="#fff" stroke="#111" stroke-width="1.1"/><path d="M7.5,10 l1.2,-8 l2,0.4 l-0.8,7.6z M9.5,10 l3,-7.5 l1.8,0.9 l-2.5,7z" fill="#fff" stroke="#111" stroke-width="1"/><ellipse cx="7" cy="12" rx="4.3" ry="3.4" fill="#fff" stroke="#111" stroke-width="1.1"/><circle cx="6.5" cy="12.5" r="0.8" fill="#d04a8a"/><path d="M4,18h9" stroke="#111" stroke-width="1"/></svg>
<div class="t" style="margin-top:1px;left:671px;top:128px;font-size:12px;color:#111">Selected Pages</div>
<!-- tooltip -->
<div class="a" style="left:701px;top:156px;width:179px;height:72px;background:linear-gradient(#fefefe,#e3ecf8 80%,#d6e2f2);border:1px solid #7a8a9a;box-shadow:1px 1px 2px rgba(0,0,0,0.2)"></div>
<div class="t" style="margin-top:1px;left:706px;top:164px;font-size:12px;font-weight:bold;color:#4a4f57">Selected Pages</div>
<div class="t" style="margin-top:1px;left:714px;top:189px;font-size:11.6px;color:#4a4f57">Attach selected pages from a</div>
<div class="t" style="margin-top:1px;left:714px;top:204px;font-size:11.6px;color:#4a4f57">Laserfiche document</div>

<!-- ============ LASERFICHE WINDOW ============ -->
<div class="a" style="left:1364px;top:72px;width:971px;height:906px;background:#f0f0f0;border-left:1px solid #6a6a6a"></div>
<div class="a" style="left:1365px;top:72px;width:970px;height:30px;background:#fff"></div>
<div class="a" style="left:1372px;top:79px;width:15px;height:15px;background:#e2581a"></div>
<div class="t" style="left:1375px;top:81px;font-size:12px;font-weight:bold;color:#fff">L</div>
<div class="t" style="left:1392px;top:81px;font-size:12.2px;color:#8a8a8a">2007 City of Aiken Annual Drinking Water Quality Report - Laserfiche</div>
<div class="t" style="left:1374px;top:109px">File</div>
<div class="t" style="left:1410px;top:109px">Edit</div>
<div class="t" style="left:1449px;top:109px">View</div>
<div class="t" style="left:1491px;top:109px">Tasks</div>
<div class="t" style="left:1538px;top:109px">Annotations</div>
<div class="t" style="left:1621px;top:109px">Tools</div>
<div class="t" style="left:1668px;top:109px">Window</div>
<div class="t" style="left:1731px;top:109px">Help</div>
<!-- pane headers -->
<div class="a" style="left:1365px;top:169px;width:224px;height:30px;background:#e3e3e3"></div>
<div class="a" style="left:1365px;top:199px;width:224px;height:2px;background:#6e6e6e"></div>
<div class="a" style="left:1595px;top:169px;width:651px;height:30px;background:#e3e3e3"></div>
<div class="a" style="left:1595px;top:199px;width:651px;height:2px;background:#6e6e6e"></div>
<div class="a" style="left:2253px;top:169px;width:82px;height:30px;background:#e3e3e3"></div>
<div class="t" style="left:1367px;top:177px;font-size:14.6px;color:#111">Thumbnails</div>
<div class="t" style="left:1599px;top:177px;font-size:14.6px;color:#111">Image</div>
<div class="t" style="left:2256px;top:177px;font-size:14.6px;color:#222">Metadata</div>
<svg class="a" style="left:1556px;top:175px" width="34" height="18" viewBox="0 0 34 18"><path d="M6,3h5M7,3v7M10,3v7M5,10h7M8.5,10v5" stroke="#111" stroke-width="1.3" fill="none"/><path d="M21,5l8,8M29,5l-8,8" stroke="#111" stroke-width="1.3"/></svg>
<svg class="a" style="left:2213px;top:175px" width="34" height="18" viewBox="0 0 34 18"><path d="M6,3h5M7,3v7M10,3v7M5,10h7M8.5,10v5" stroke="#111" stroke-width="1.3" fill="none"/><path d="M21,5l8,8M29,5l-8,8" stroke="#111" stroke-width="1.3"/></svg>
<!-- thumbnails -->
<div class="a" style="left:1366px;top:201px;width:223px;height:756px;background:#fff"></div>
<div class="a" style="left:1366px;top:201px;width:127px;height:155px;background:#cfdce6"></div>
<div class="a" style="left:1366px;top:511px;width:127px;height:156px;background:#cfdce6"></div>
<div class="a" style="left:1394px;top:211px;width:70px;height:115px;background:#fff;border:2px solid #111"></div>
<div class="a" style="left:1394px;top:366px;width:70px;height:115px;background:#fff;border:2px solid #111"></div>
<div class="a" style="left:1394px;top:521px;width:70px;height:115px;background:#fff;border:2px solid #111"></div>
<div class="a" style="left:1422px;top:330px;width:14px;height:19px;border:1px solid #333"></div>
<div class="t" style="left:1425px;top:334px;font-size:12px;color:#111">1</div>
<div class="t" style="left:1425px;top:489px;font-size:12px;color:#111">2</div>
<div class="t" style="left:1425px;top:644px;font-size:12px;color:#111">3</div>
<!-- image pane -->
<div class="a" style="left:1595px;top:201px;width:651px;height:756px;background:#fff;border-left:2px solid #6e6e6e"></div>
<div class="a" style="left:2230px;top:201px;width:16px;height:756px;background:#f0f0f0"></div>
<div class="a" style="left:2231px;top:218px;width:14px;height:522px;background:#c8c8c8"></div>
<svg class="a" style="left:2230px;top:201px" width="16" height="756" viewBox="0 0 16 756"><path d="M4,12l4,-4l4,4" fill="none" stroke="#333" stroke-width="1.4"/><path d="M4,744l4,4l4,-4" fill="none" stroke="#333" stroke-width="1.4"/></svg>
<!-- metadata -->
<div class="a" style="left:2253px;top:199px;width:82px;height:2px;background:#e3e3e3"></div>
<div class="a" style="left:2253px;top:201px;width:82px;height:442px;background:#e9f1fb;border-left:3px solid #6e6e6e"></div>
<div class="a" style="left:2256px;top:201px;width:79px;height:24px;background:#f0f0f0"></div>
<div class="a" style="left:2256px;top:201px;width:47px;height:24px;background:#fff;border-right:1px solid #ccc"></div>
<div class="t" style="left:2260px;top:206px;font-size:12.5px;color:#111">Fields</div>
<div class="t" style="left:2308px;top:208px;font-size:12.5px;color:#111">Tags</div>
<div class="a" style="left:2256px;top:225px;width:79px;height:2px;background:#6e6e6e"></div>
<div class="a" style="left:2256px;top:227px;width:79px;height:36px;background:#dde5ee"></div>
<div class="t" style="left:2261px;top:239px;font-size:14px;font-weight:bold;color:#222">Template:</div>
<div class="a" style="left:2333px;top:236px;width:4px;height:21px;background:#fff;border:1px solid #777"></div>
<div class="t" style="left:2265px;top:279px;font-size:12.5px;color:#333">Document</div>
<div class="t" style="left:2265px;top:340px;font-size:12.5px;color:#333">Type</div>
<div class="t" style="left:2265px;top:401px;font-size:12.5px;color:#333">Category</div>
<div class="t" style="left:2265px;top:462px;font-size:12.5px;color:#333">Addressee</div>
<div class="t" style="left:2265px;top:523px;font-size:12.5px;color:#333">Date</div>
<div class="t" style="left:2265px;top:584px;font-size:12.5px;color:#333">Abstract</div>
<div class="a" style="left:2267px;top:300px;width:80px;height:22px;background:#fff;border:1px solid #777"></div>
<div class="a" style="left:2267px;top:361px;width:80px;height:22px;background:#fff;border:1px solid #777"></div>
<div class="a" style="left:2267px;top:422px;width:80px;height:22px;background:#fff;border:1px solid #777"></div>
<div class="a" style="left:2267px;top:483px;width:80px;height:22px;background:#fff;border:1px solid #777"></div>
<div class="a" style="left:2267px;top:544px;width:80px;height:22px;background:#fff;border:1px solid #777"></div>
<div class="a" style="left:2267px;top:605px;width:80px;height:22px;background:#fff;border:1px solid #777"></div>
<div class="t" style="left:2276px;top:549px;font-size:12.5px;color:#222">/&nbsp; /</div>
<div class="a" style="left:2253px;top:643px;width:82px;height:37px;background:#e3e3e3"></div>
<div class="a" style="left:2253px;top:643px;width:82px;height:6px;background:#ececec"></div>
<div class="t" style="left:2256px;top:657px;font-size:14.6px;color:#111">Annotations</div>
<div class="a" style="left:2253px;top:680px;width:82px;height:277px;background:#fff;border-left:2px solid #555;border-top:2px solid #555"></div>
<div class="t" style="left:2257px;top:685px;font-size:12.3px;color:#5a0f14">This document</div>
<!-- status -->
<div class="a" style="left:1365px;top:957px;width:970px;height:21px;background:#f0f0f0;border-top:1px solid #d8d8d8"></div>
<svg class="a" style="left:2045px;top:963px" width="16" height="12" viewBox="0 0 16 12"><path d="M1,6h8 M6,2l4,4l-4,4z" stroke="#1a9a1a" stroke-width="2" fill="#1a9a1a"/><circle cx="10" cy="6" r="2.5" fill="#0a6a0a"/></svg>
<div class="t" style="left:2065px;top:963px;font-size:11.6px;color:#111">City-of-Aiken-LF (CITY_OF_AIKEN\WFunderberg)</div>
<div class="a" style="left:2325px;top:960px;width:1px;height:16px;background:#bbb"></div>
<div class="t" style="left:2330px;top:963px;font-size:12.3px;color:#111">2</div>

<svg class="a" style="left:1365px;top:127px" width="970" height="42" viewBox="1365 127 970 42">
<defs>
 <linearGradient id="btn" x1="0" y1="0" x2="0" y2="1"><stop offset="0" stop-color="#fafafa"/><stop offset="1" stop-color="#e2e4e8"/></linearGradient>
 <linearGradient id="zc" x1="0" y1="0" x2="0" y2="1"><stop offset="0" stop-color="#fdfdfd"/><stop offset="1" stop-color="#e0e6ee"/></linearGradient>
</defs>
<g fill="#a8a8a8"><rect x="1368" y="134" width="2" height="2"/><rect x="1368" y="139" width="2" height="2"/><rect x="1368" y="144" width="2" height="2"/><rect x="1368" y="149" width="2" height="2"/><rect x="1368" y="154" width="2" height="2"/><rect x="1368" y="159" width="2" height="2"/></g>
<g stroke="#b8b8b8" stroke-width="1.2"><path d="M1487.5,133V163 M1770.5,133V163 M1853.5,133V163 M1934.5,133V163 M1978.5,133V163 M2022.5,133V163 M2295.5,133V163"/></g>
<!-- save -->
<path d="M1377,135h22l4,4v22h-26z" fill="#c4c4c4"/><rect x="1383" y="135" width="12" height="8" fill="#e8e8e8"/><rect x="1381" y="149" width="18" height="12" fill="#e8e8e8"/><path d="M1383,153h14M1383,157h14" stroke="#c4c4c4"/>
<!-- print -->
<rect x="1419.5" y="135.5" width="17" height="8" fill="#fff" stroke="#888"/><rect x="1414" y="142" width="28" height="12" rx="3" fill="#a8a8a8"/><rect x="1418.5" y="149.5" width="19" height="11" fill="#fff" stroke="#888"/><rect x="1433" y="145" width="3" height="2" fill="#666"/>
<!-- scanner -->
<path d="M1454,155l17,-19" stroke="#c8c8c8" stroke-width="3.5"/><rect x="1451" y="155" width="29" height="6" fill="#c8c8c8"/><path d="M1456,158h3M1461,158h3M1466,158h3M1471,158h3" stroke="#eee" stroke-width="2"/>
<!-- hand -->
<path d="M1505,161q-6,-6 -9,-12q0,-2 2,-1l4,4v-14q1,-2 3,0v11v-13q1,-2 3,0v13v-12q1,-2 3,0v12v-9q1,-2 3,0v12q0,6 -3,9z" fill="#fff" stroke="#777" stroke-width="1.2"/>
<!-- zoom +/- -->
<circle cx="1548" cy="148" r="16" fill="url(#zc)" stroke="#9aa0a8" stroke-width="1.2"/><path d="M1543,141v10M1538,146h10" stroke="#2a82c8" stroke-width="3"/><path d="M1548,153h10" stroke="#2a82c8" stroke-width="3"/>
<!-- stamp -->
<circle cx="1586" cy="137" r="4.5" fill="#e0502a"/><rect x="1584" y="140" width="4" height="8" fill="#d04820"/><path d="M1572,158q0,-10 6,-10h16q6,0 6,10z" fill="#e8a840"/><rect x="1571" y="155" width="30" height="7" rx="2" fill="#c88020"/>
<path d="M1609,148h5l-2.5,3z" fill="#222"/>
<!-- sticky -->
<path d="M1623,135h25v21l-5,6h-20z" fill="#f6e050" stroke="#e0c030" stroke-width="0.8"/><path d="M1627,140h17M1627,144h17M1627,148h17M1627,152h17" stroke="#e8c830" stroke-width="0.8"/>
<!-- highlighter -->
<path d="M1665,156l17,-22l6,4l-17,22z" fill="#f0d820"/><path d="M1662,158l3,-4l6,4l-3,4z" fill="#bbb"/><path d="M1657,163l5,-6l4,3z" fill="#f0d820"/><path d="M1657,163.5h32" stroke="#f0d820" stroke-width="1.3"/>
<!-- marker -->
<path d="M1703,156l17,-22l6,4l-17,22z" fill="#444"/><path d="M1700,158l3,-4l6,4l-3,4z" fill="#888"/><path d="M1695,163l5,-6l4,3z" fill="#444"/><path d="M1695,163.5h32" stroke="#444" stroke-width="1.3"/>
<!-- a box -->
<rect x="1734" y="135" width="24" height="27" fill="#cfcfcf"/><text x="1738" y="156" font-family="Liberation Sans" font-size="22" fill="#f4f4f4">a</text><path d="M1762,134h4M1764,134v29M1762,163h4" stroke="#ccc"/>
<!-- nav -->
<path d="M1802,136v25l-17,-12.5z" fill="#c4c4c4"/><path d="M1823,136v25l17,-12.5z" fill="#1a86d8"/>
<circle cx="1875" cy="148" r="15.5" fill="url(#zc)" stroke="#9aa0a8" stroke-width="1.2"/><path d="M1875,140v16M1867,148h16" stroke="#3a86c0" stroke-width="3.2"/>
<circle cx="1913" cy="148" r="15.5" fill="url(#zc)" stroke="#9aa0a8" stroke-width="1.2"/><path d="M1905,148h16" stroke="#3a86c0" stroke-width="3.2"/>
<!-- rotate -->
<path d="M1958,160 a10,10 0 1 1 4,-18" fill="none" stroke="#5aaa6a" stroke-width="6"/><path d="M1958,135 l12,6 l-10,8z" fill="#5aaa6a"/>
<!-- OCR -->
<rect x="1985.5" y="132.5" width="30" height="30" fill="#cfeaf4" stroke="#2a7a9a"/><path d="M2000.5,133V162M1986,147.5h29" stroke="#2a7a9a" stroke-width="0.8"/><ellipse cx="2000.5" cy="147.5" rx="10" ry="12" fill="none" stroke="#0f3a4a" stroke-width="5"/>
<!-- pane buttons -->
<g>
<rect x="2026.5" y="129.5" width="37" height="36" fill="#d6ebfa" stroke="#1f78c8" stroke-width="1.2"/>
<rect x="2067.5" y="129.5" width="32" height="36" fill="none" stroke="none"/>
<rect x="2102.5" y="129.5" width="37" height="36" fill="#d6ebfa" stroke="#1f78c8" stroke-width="1.2"/>
<rect x="2140.5" y="129.5" width="37" height="36" fill="#d6ebfa" stroke="#1f78c8" stroke-width="1.2"/>
<rect x="2178.5" y="129.5" width="37" height="36" fill="#d6ebfa" stroke="#1f78c8" stroke-width="1.2"/>
</g>
<g fill="url(#btn)" stroke="#999" stroke-width="1">
<rect x="2029.5" y="132.5" width="27" height="30"/><rect x="2069.5" y="132.5" width="27" height="30"/><rect x="2105.5" y="132.5" width="30" height="30"/><rect x="2143.5" y="132.5" width="27" height="30"/><rect x="2181.5" y="132.5" width="27" height="30"/><rect x="2219.5" y="132.5" width="27" height="30"/><rect x="2257.5" y="132.5" width="27" height="30"/>
</g>
<g stroke="#aaa" stroke-width="1"><path d="M2030,136h26M2070,136h26M2106,136h29M2144,136h26M2182,136h26M2220,136h26M2258,136h26"/></g>
<rect x="2037.5" y="139.5" width="22" height="22" fill="#fff" stroke="#888"/><rect x="2039" y="141" width="19" height="19" fill="#8ac8ee"/><path d="M2039,160l6,-13l4,6l3,-4l6,11z" fill="#c02a3a"/><circle cx="2054" cy="145" r="2.5" fill="#f0e070"/>
<rect x="2075.5" y="138.5" width="23" height="22" fill="#fff" stroke="#888"/><text x="2079" y="158" font-family="Liberation Serif" font-size="21" fill="#333">T</text>
<rect x="2113.5" y="141.5" width="23" height="8" rx="1" fill="#fff" stroke="#888"/><rect x="2113.5" y="152.5" width="23" height="8" rx="1" fill="#fff" stroke="#888"/><path d="M2118,143v5M2118,154v5" stroke="#666"/>
<rect x="2151" y="140" width="10" height="10" fill="#ee8a50"/><rect x="2163" y="140" width="10" height="10" fill="#ee8a50"/><rect x="2151" y="152" width="10" height="10" fill="#ee8a50"/><rect x="2163" y="152" width="10" height="10" fill="#ee8a50"/>
<path d="M2198,141h18v11h-4l-3,3v-3h-11z" fill="#f0d860" stroke="#c8a830" stroke-width="0.8"/><path d="M2186,148h18v11h-12l-4,4v-4h-2z" fill="#f0d860" stroke="#c8a830" stroke-width="0.8"/>
<path d="M2232.5,138.5h12l4,4v18h-16z" fill="#fff" stroke="#888"/><path d="M2233,139l6,0l-6,6z" fill="#d8502a"/><path d="M2235,148h11M2235,151h11M2235,154h11M2235,157h11" stroke="#aaa" stroke-width="0.8"/>
<circle cx="2275" cy="150" r="9" fill="#e04a1a"/><g stroke="#e04a1a" stroke-width="4"><path d="M2275,138v24M2263,150h24M2266.5,141.5l17,17M2283.5,141.5l-17,17"/></g><circle cx="2275" cy="150" r="3.5" fill="#fff"/>
<path d="M2317.5,132l4.2,10.5l11.3,0.8l-8.7,7.3l2.8,11l-9.6,-6l-9.6,6l2.8,-11l-8.7,-7.3l11.3,-0.8z" fill="#f0c82a" stroke="#c8a020" stroke-width="0.8"/>
</svg>

<svg class="a" style="left:1396px;top:213px" width="66" height="111" viewBox="0 0 66 111"><rect x="3" y="3" width="58" height="7" fill="#cfe2f4"/><rect x="20" y="4" width="26" height="1.2" fill="#7aa0d0"/><rect x="15" y="6" width="36" height="1.2" fill="#7aa0d0"/><rect x="5" y="4" width="4" height="5" fill="#999"/><rect x="4.0" y="12.0" width="16.4" height="0.9" fill="#c4c4c4"/><rect x="4.0" y="14.6" width="16.7" height="0.9" fill="#c4c4c4"/><rect x="4.0" y="17.2" width="15.9" height="0.9" fill="#c4c4c4"/><rect x="4.0" y="19.8" width="16.9" height="0.9" fill="#c4c4c4"/><rect x="4.0" y="22.4" width="16.1" height="0.9" fill="#c4c4c4"/><rect x="4.0" y="25.0" width="16.4" height="0.9" fill="#c4c4c4"/><rect x="4.0" y="27.6" width="16.9" height="0.9" fill="#c4c4c4"/><rect x="4.0" y="30.2" width="16.1" height="0.9" fill="#c4c4c4"/><rect x="4.0" y="32.8" width="16.9" height="0.9" fill="#c4c4c4"/><rect x="4.0" y="35.4" width="16.3" height="0.9" fill="#c4c4c4"/><rect x="4.0" y="38.0" width="16.9" height="0.9" fill="#c4c4c4"/><rect x="4.0" y="40.6" width="16.8" height="0.9" fill="#c4c4c4"/><rect x="4.0" y="43.2" width="16.3" height="0.9" fill="#c4c4c4"/><rect x="4.0" y="45.8" width="15.6" height="0.9" fill="#c4c4c4"/><rect x="4.0" y="48.4" width="16.8" height="0.9" fill="#c4c4c4"/><rect x="4.0" y="51.0" width="16.6" height="0.9" fill="#c4c4c4"/><rect x="4.0" y="53.6" width="15.9" height="0.9" fill="#c4c4c4"/><rect x="4.0" y="56.2" width="15.4" height="0.9" fill="#c4c4c4"/><rect x="4.0" y="58.8" width="16.0" height="0.9" fill="#c4c4c4"/><rect x="4.0" y="61.4" width="16.3" height="0.9" fill="#c4c4c4"/><rect x="4.0" y="64.0" width="15.3" height="0.9" fill="#c4c4c4"/><rect x="4.0" y="66.6" width="16.9" height="0.9" fill="#c4c4c4"/><rect x="4.0" y="69.2" width="15.5" height="0.9" fill="#c4c4c4"/><rect x="4.0" y="71.8" width="16.5" height="0.9" fill="#c4c4c4"/><rect x="23.0" y="12.0" width="16.8" height="0.9" fill="#c4c4c4"/><rect x="23.0" y="14.6" width="16.8" height="0.9" fill="#c4c4c4"/><rect x="23.0" y="17.2" width="16.5" height="0.9" fill="#c4c4c4"/><rect x="23.0" y="19.8" width="15.6" height="0.9" fill="#c4c4c4"/><rect x="23.0" y="22.4" width="16.7" height="0.9" fill="#c4c4c4"/><rect x="23.0" y="25.0" width="16.0" height="0.9" fill="#c4c4c4"/><rect x="23.0" y="27.6" width="15.9" height="0.9" fill="#c4c4c4"/><rect x="23.0" y="30.2" width="16.4" height="0.9" fill="#c4c4c4"/><rect x="23.0" y="32.8" width="16.1" height="0.9" fill="#c4c4c4"/><rect x="23.0" y="35.4" width="16.9" height="0.9" fill="#c4c4c4"/><rect x="23.0" y="38.0" width="16.9" height="0.9" fill="#c4c4c4"/><rect x="23.0" y="40.6" width="16.6" height="0.9" fill="#c4c4c4"/><rect x="23.0" y="43.2" width="15.8" height="0.9" fill="#c4c4c4"/><rect x="23.0" y="45.8" width="16.3" height="0.9" fill="#c4c4c4"/><rect x="23.0" y="48.4" width="16.5" height="0.9" fill="#c4c4c4"/><rect x="23.0" y="51.0" width="16.0" height="0.9" fill="#c4c4c4"/><rect x="23.0" y="53.6" width="16.2" height="0.9" fill="#c4c4c4"/><rect x="23.0" y="56.2" width="16.5" height="0.9" fill="#c4c4c4"/><rect x="23.0" y="58.8" width="15.6" height="0.9" fill="#c4c4c4"/><rect x="23.0" y="61.4" width="15.8" height="0.9" fill="#c4c4c4"/><rect x="23.0" y="64.0" width="16.6" height="0.9" fill="#c4c4c4"/><rect x="23.0" y="66.6" width="16.0" height="0.9" fill="#c4c4c4"/><rect x="23.0" y="69.2" width="16.1" height="0.9" fill="#c4c4c4"/><rect x="23.0" y="71.8" width="15.5" height="0.9" fill="#c4c4c4"/><rect x="42.0" y="12.0" width="12.1" height="0.9" fill="#c4c4c4"/><rect x="42.0" y="14.6" width="12.6" height="0.9" fill="#c4c4c4"/><rect x="42.0" y="17.2" width="11.7" height="0.9" fill="#c4c4c4"/><rect x="42.0" y="19.8" width="12.8" height="0.9" fill="#c4c4c4"/><rect x="42.0" y="22.4" width="12.5" height="0.9" fill="#c4c4c4"/><rect x="42.0" y="25.0" width="12.0" height="0.9" fill="#c4c4c4"/><rect x="42.0" y="27.6" width="12.8" height="0.9" fill="#c4c4c4"/><rect x="42.0" y="30.2" width="12.4" height="0.9" fill="#c4c4c4"/><rect x="42.0" y="32.8" width="12.9" height="0.9" fill="#c4c4c4"/><rect x="42.0" y="35.4" width="12.1" height="0.9" fill="#c4c4c4"/><rect x="42.0" y="38.0" width="12.0" height="0.9" fill="#c4c4c4"/><rect x="42.0" y="40.6" width="12.3" height="0.9" fill="#c4c4c4"/><rect x="42.0" y="43.2" width="11.9" height="0.9" fill="#c4c4c4"/><rect x="42.0" y="45.8" width="12.6" height="0.9" fill="#c4c4c4"/><rect x="42.0" y="48.4" width="12.1" height="0.9" fill="#c4c4c4"/><rect x="42.0" y="51.0" width="12.2" height="0.9" fill="#c4c4c4"/><rect x="42.0" y="53.6" width="12.2" height="0.9" fill="#c4c4c4"/><rect x="42.0" y="56.2" width="12.4" height="0.9" fill="#c4c4c4"/><rect x="42.0" y="58.8" width="11.9" height="0.9" fill="#c4c4c4"/><rect x="42.0" y="61.4" width="11.8" height="0.9" fill="#c4c4c4"/><rect x="42.0" y="64.0" width="12.4" height="0.9" fill="#c4c4c4"/><rect x="42.0" y="66.6" width="12.1" height="0.9" fill="#c4c4c4"/><rect x="42.0" y="69.2" width="12.9" height="0.9" fill="#c4c4c4"/><rect x="42.0" y="71.8" width="12.1" height="0.9" fill="#c4c4c4"/><circle cx="59" cy="14" r="2.5" fill="none" stroke="#888" stroke-width="0.8"/><circle cx="58.0" cy="20" r="1" fill="#8ab4dc"/><circle cx="59.5" cy="25" r="1" fill="#8ab4dc"/><circle cx="58.0" cy="30" r="1" fill="#8ab4dc"/><circle cx="59.5" cy="35" r="1" fill="#8ab4dc"/><circle cx="58.0" cy="40" r="1" fill="#8ab4dc"/><circle cx="59.5" cy="45" r="1" fill="#8ab4dc"/><circle cx="58.0" cy="50" r="1" fill="#8ab4dc"/><circle cx="59.5" cy="55" r="1" fill="#8ab4dc"/><circle cx="58.0" cy="60" r="1" fill="#8ab4dc"/><circle cx="59.5" cy="65" r="1" fill="#8ab4dc"/><rect x="56" y="66" width="4" height="7" fill="#9cc6f0"/></svg><svg class="a" style="left:1396px;top:368px" width="66" height="111" viewBox="0 0 66 111"><rect x="20" y="3" width="26" height="1" fill="#cfcfcf"/><rect x="3" y="6" width="60" height="0.8" fill="#999"/><rect x="3" y="28" width="60" height="0.8" fill="#999"/><rect x="3" y="42" width="60" height="0.8" fill="#999"/><rect x="3" y="60" width="60" height="0.8" fill="#999"/><rect x="3.0" y="8.0" width="7.8" height="0.7" fill="#d0d0d0"/><rect x="3.0" y="10.4" width="7.2" height="0.7" fill="#d0d0d0"/><rect x="3.0" y="12.8" width="7.5" height="0.7" fill="#d0d0d0"/><rect x="3.0" y="15.2" width="8.5" height="0.7" fill="#d0d0d0"/><rect x="3.0" y="17.6" width="8.3" height="0.7" fill="#d0d0d0"/><rect x="3.0" y="20.0" width="7.8" height="0.7" fill="#d0d0d0"/><rect x="3.0" y="22.4" width="9.0" height="0.7" fill="#d0d0d0"/><rect x="3.0" y="24.8" width="8.2" height="0.7" fill="#d0d0d0"/><rect x="40.0" y="10.0" width="21.3" height="0.7" fill="#d0d0d0"/><rect x="40.0" y="12.2" width="21.5" height="0.7" fill="#d0d0d0"/><rect x="40.0" y="14.4" width="21.7" height="0.7" fill="#d0d0d0"/><rect x="40.0" y="16.6" width="18.6" height="0.7" fill="#d0d0d0"/><rect x="40.0" y="18.8" width="21.4" height="0.7" fill="#d0d0d0"/><rect x="40.0" y="21.0" width="20.9" height="0.7" fill="#d0d0d0"/><rect x="40.0" y="23.2" width="20.3" height="0.7" fill="#d0d0d0"/><rect x="40.0" y="30.0" width="20.1" height="0.7" fill="#c8c8c8"/><rect x="40.0" y="32.2" width="21.8" height="0.7" fill="#c8c8c8"/><rect x="40.0" y="34.4" width="21.0" height="0.7" fill="#c8c8c8"/><rect x="40.0" y="36.6" width="20.8" height="0.7" fill="#c8c8c8"/><rect x="40.0" y="38.8" width="20.1" height="0.7" fill="#c8c8c8"/><rect x="40.0" y="44.0" width="20.2" height="0.7" fill="#bdbdbd"/><rect x="40.0" y="46.2" width="20.1" height="0.7" fill="#bdbdbd"/><rect x="40.0" y="48.4" width="21.4" height="0.7" fill="#bdbdbd"/><rect x="40.0" y="50.6" width="21.1" height="0.7" fill="#bdbdbd"/><rect x="40.0" y="52.8" width="21.2" height="0.7" fill="#bdbdbd"/><rect x="40.0" y="55.0" width="20.1" height="0.7" fill="#bdbdbd"/><rect x="40.0" y="57.2" width="19.9" height="0.7" fill="#bdbdbd"/><rect x="3.0" y="31.0" width="25.8" height="0.7" fill="#dcdcdc"/><rect x="3.0" y="35.0" width="25.6" height="0.7" fill="#dcdcdc"/><rect x="3.0" y="39.0" width="25.1" height="0.7" fill="#dcdcdc"/><rect x="3.0" y="43.0" width="25.1" height="0.7" fill="#dcdcdc"/><rect x="3.0" y="47.0" width="23.1" height="0.7" fill="#dcdcdc"/><rect x="3.0" y="51.0" width="22.2" height="0.7" fill="#dcdcdc"/><rect x="3.0" y="55.0" width="24.9" height="0.7" fill="#dcdcdc"/><rect x="3.0" y="62.0" width="59.0" height="0.7" fill="#c8c8c8"/><rect x="3.0" y="63.8" width="59.0" height="0.7" fill="#c8c8c8"/><rect x="3.0" y="65.6" width="59.0" height="0.7" fill="#c8c8c8"/><rect x="3.0" y="67.4" width="59.0" height="0.7" fill="#c8c8c8"/><rect x="3.0" y="69.2" width="59.0" height="0.7" fill="#c8c8c8"/><rect x="3.0" y="71.0" width="59.0" height="0.7" fill="#c8c8c8"/><rect x="3.0" y="72.8" width="59.0" height="0.7" fill="#c8c8c8"/><rect x="3.0" y="74.6" width="59.0" height="0.7" fill="#c8c8c8"/><rect x="3.0" y="78.0" width="17.5" height="0.7" fill="#d0d0d0"/><rect x="3.0" y="80.0" width="21.6" height="0.7" fill="#d0d0d0"/><rect x="3.0" y="82.0" width="16.1" height="0.7" fill="#d0d0d0"/></svg><svg class="a" style="left:1396px;top:523px" width="66" height="111" viewBox="0 0 66 111"><rect x="18" y="3" width="30" height="1" fill="#cfcfcf"/><rect x="3" y="6" width="60" height="0.7" fill="#cfcfcf"/><rect x="3" y="14" width="60" height="0.7" fill="#cfcfcf"/><rect x="3" y="22" width="60" height="0.7" fill="#cfcfcf"/><rect x="3" y="30" width="60" height="0.7" fill="#cfcfcf"/><rect x="3" y="38" width="60" height="0.7" fill="#cfcfcf"/><rect x="3" y="46" width="60" height="0.7" fill="#cfcfcf"/><rect x="12" y="6" width="0.6" height="40" fill="#d8d8d8"/><rect x="22" y="6" width="0.6" height="40" fill="#d8d8d8"/><rect x="30" y="6" width="0.6" height="40" fill="#d8d8d8"/><rect x="38" y="6" width="0.6" height="40" fill="#d8d8d8"/><rect x="46" y="6" width="0.6" height="40" fill="#d8d8d8"/><rect x="54" y="6" width="0.6" height="40" fill="#d8d8d8"/><rect x="3.0" y="50.0" width="59.0" height="0.6" fill="#c8c8c8"/><rect x="3.0" y="51.8" width="59.0" height="0.6" fill="#c8c8c8"/><rect x="3.0" y="53.6" width="59.0" height="0.6" fill="#c8c8c8"/><rect x="3.0" y="55.4" width="59.0" height="0.6" fill="#c8c8c8"/><rect x="12" y="58" width="12" height="20" fill="#a9cbec"/><rect x="36" y="58" width="12" height="20" fill="#a9cbec"/><rect x="3.0" y="58.0" width="6.4" height="0.6" fill="#d0d0d0"/><rect x="3.0" y="60.0" width="6.9" height="0.6" fill="#d0d0d0"/><rect x="3.0" y="62.0" width="6.1" height="0.6" fill="#d0d0d0"/><rect x="3.0" y="64.0" width="6.9" height="0.6" fill="#d0d0d0"/><rect x="3.0" y="66.0" width="6.9" height="0.6" fill="#d0d0d0"/><rect x="3.0" y="68.0" width="6.7" height="0.6" fill="#d0d0d0"/><rect x="3.0" y="70.0" width="6.8" height="0.6" fill="#d0d0d0"/><rect x="3.0" y="72.0" width="6.5" height="0.6" fill="#d0d0d0"/><rect x="3.0" y="74.0" width="6.9" height="0.6" fill="#d0d0d0"/><rect x="3.0" y="76.0" width="7.0" height="0.6" fill="#d0d0d0"/><rect x="26.0" y="58.0" width="7.8" height="0.6" fill="#d0d0d0"/><rect x="26.0" y="60.0" width="7.8" height="0.6" fill="#d0d0d0"/><rect x="26.0" y="62.0" width="7.4" height="0.6" fill="#d0d0d0"/><rect x="26.0" y="64.0" width="8.0" height="0.6" fill="#d0d0d0"/><rect x="26.0" y="66.0" width="6.6" height="0.6" fill="#d0d0d0"/><rect x="26.0" y="68.0" width="7.0" height="0.6" fill="#d0d0d0"/><rect x="26.0" y="70.0" width="7.8" height="0.6" fill="#d0d0d0"/><rect x="26.0" y="72.0" width="7.6" height="0.6" fill="#d0d0d0"/><rect x="26.0" y="74.0" width="7.4" height="0.6" fill="#d0d0d0"/><rect x="26.0" y="76.0" width="7.4" height="0.6" fill="#d0d0d0"/><rect x="50.0" y="58.0" width="11.7" height="0.6" fill="#d0d0d0"/><rect x="50.0" y="60.0" width="10.0" height="0.6" fill="#d0d0d0"/><rect x="50.0" y="62.0" width="9.6" height="0.6" fill="#d0d0d0"/><rect x="50.0" y="64.0" width="10.9" height="0.6" fill="#d0d0d0"/><rect x="50.0" y="66.0" width="10.8" height="0.6" fill="#d0d0d0"/><rect x="50.0" y="68.0" width="11.8" height="0.6" fill="#d0d0d0"/><rect x="50.0" y="70.0" width="11.8" height="0.6" fill="#d0d0d0"/><rect x="50.0" y="72.0" width="11.2" height="0.6" fill="#d0d0d0"/><rect x="50.0" y="74.0" width="11.4" height="0.6" fill="#d0d0d0"/><rect x="50.0" y="76.0" width="10.0" height="0.6" fill="#d0d0d0"/><rect x="3.0" y="80.0" width="59.0" height="0.6" fill="#d0d0d0"/><rect x="3.0" y="81.8" width="59.0" height="0.6" fill="#d0d0d0"/><rect x="3.0" y="83.6" width="59.0" height="0.6" fill="#d0d0d0"/><rect x="3" y="88" width="10" height="0.8" fill="#bbb"/><rect x="30" y="88" width="10" height="0.8" fill="#bbb"/></svg>
<svg class="a" style="left:1597px;top:201px" width="633" height="756" viewBox="1597 201 633 756">
<rect x="1641" y="224" width="576" height="62" fill="#cfe2f4"/>
<circle cx="1777.8" cy="257.7" r="0.9" fill="#dbe8f5"/><circle cx="1913.6" cy="260.0" r="1.3" fill="#e6f0fa"/><circle cx="1790.1" cy="238.5" r="1.9" fill="#e6f0fa"/><circle cx="1952.1" cy="258.1" r="0.9" fill="#c2d6ea"/><circle cx="1774.4" cy="233.4" r="1.8" fill="#e6f0fa"/><circle cx="2067.2" cy="265.6" r="0.4" fill="#dbe8f5"/><circle cx="1665.6" cy="272.4" r="1.6" fill="#a9c2dc"/><circle cx="1912.8" cy="268.6" r="1.7" fill="#e6f0fa"/><circle cx="1868.1" cy="273.7" r="1.0" fill="#c2d6ea"/><circle cx="2146.3" cy="230.0" r="0.5" fill="#c2d6ea"/><circle cx="1789.3" cy="265.7" r="1.5" fill="#a9c2dc"/><circle cx="1883.2" cy="275.7" r="1.2" fill="#dbe8f5"/><circle cx="1977.4" cy="260.2" r="1.7" fill="#b6cfe6"/><circle cx="2133.4" cy="285.4" r="1.4" fill="#c2d6ea"/><circle cx="2042.7" cy="244.2" r="1.2" fill="#dbe8f5"/><circle cx="1968.2" cy="268.3" r="0.6" fill="#dbe8f5"/><circle cx="1794.6" cy="231.7" r="1.1" fill="#e6f0fa"/><circle cx="1691.9" cy="273.6" r="1.0" fill="#c2d6ea"/><circle cx="1652.6" cy="250.5" r="1.0" fill="#b6cfe6"/><circle cx="1666.4" cy="262.1" r="0.4" fill="#dbe8f5"/><circle cx="1831.3" cy="278.6" r="1.9" fill="#dbe8f5"/><circle cx="1776.7" cy="226.2" r="0.3" fill="#b6cfe6"/><circle cx="1985.9" cy="225.9" r="0.6" fill="#e6f0fa"/><circle cx="1808.7" cy="240.3" r="1.4" fill="#a9c2dc"/><circle cx="1821.5" cy="283.4" r="1.7" fill="#e6f0fa"/><circle cx="1857.6" cy="277.9" r="0.9" fill="#dbe8f5"/><circle cx="2032.6" cy="230.4" r="1.9" fill="#dbe8f5"/><circle cx="1797.0" cy="263.3" r="1.4" fill="#a9c2dc"/><circle cx="1892.5" cy="240.0" r="0.8" fill="#a9c2dc"/><circle cx="1647.6" cy="249.7" r="1.2" fill="#b6cfe6"/><circle cx="1857.5" cy="260.5" r="0.5" fill="#a9c2dc"/><circle cx="1909.1" cy="266.1" r="0.9" fill="#a9c2dc"/><circle cx="2065.4" cy="225.4" r="0.4" fill="#b6cfe6"/><circle cx="2194.9" cy="239.6" r="1.0" fill="#dbe8f5"/><circle cx="1986.8" cy="235.0" r="0.6" fill="#a9c2dc"/><circle cx="2126.2" cy="240.4" r="1.6" fill="#b6cfe6"/><circle cx="2085.1" cy="225.7" r="1.2" fill="#c2d6ea"/><circle cx="1819.3" cy="237.8" r="1.6" fill="#c2d6ea"/><circle cx="1829.5" cy="266.0" r="1.3" fill="#b6cfe6"/><circle cx="1699.6" cy="244.0" r="0.8" fill="#c2d6ea"/><circle cx="1893.1" cy="277.0" r="0.6" fill="#a9c2dc"/><circle cx="2067.7" cy="237.5" r="1.2" fill="#a9c2dc"/><circle cx="1770.4" cy="231.5" r="1.1" fill="#c2d6ea"/><circle cx="1822.2" cy="275.8" r="1.2" fill="#a9c2dc"/><circle cx="1836.6" cy="275.3" r="0.4" fill="#dbe8f5"/><circle cx="1839.5" cy="232.0" r="0.8" fill="#a9c2dc"/><circle cx="1908.2" cy="263.3" r="0.8" fill="#dbe8f5"/><circle cx="1876.5" cy="281.1" r="0.5" fill="#b6cfe6"/><circle cx="1915.5" cy="275.6" r="1.3" fill="#dbe8f5"/><circle cx="1890.8" cy="282.9" r="1.8" fill="#c2d6ea"/><circle cx="1659.6" cy="252.3" r="1.5" fill="#dbe8f5"/><circle cx="2194.9" cy="257.7" r="1.7" fill="#b6cfe6"/><circle cx="2134.3" cy="284.2" r="0.5" fill="#c2d6ea"/><circle cx="1666.9" cy="280.0" r="1.4" fill="#c2d6ea"/><circle cx="2156.5" cy="279.8" r="1.2" fill="#b6cfe6"/><circle cx="1917.6" cy="231.5" r="1.1" fill="#c2d6ea"/><circle cx="2022.2" cy="256.5" r="1.0" fill="#dbe8f5"/><circle cx="1706.3" cy="231.8" r="1.9" fill="#dbe8f5"/><circle cx="1915.4" cy="272.5" r="0.9" fill="#c2d6ea"/><circle cx="1711.3" cy="279.0" r="0.5" fill="#c2d6ea"/><circle cx="2096.2" cy="281.1" r="1.6" fill="#b6cfe6"/><circle cx="1921.3" cy="259.4" r="0.9" fill="#a9c2dc"/><circle cx="1783.7" cy="262.3" r="1.1" fill="#b6cfe6"/><circle cx="1912.9" cy="272.1" r="0.3" fill="#b6cfe6"/><circle cx="2086.8" cy="226.9" r="0.4" fill="#e6f0fa"/><circle cx="2201.4" cy="277.0" r="0.4" fill="#dbe8f5"/><circle cx="1922.7" cy="233.7" r="0.4" fill="#e6f0fa"/><circle cx="2013.0" cy="260.4" r="0.9" fill="#c2d6ea"/><circle cx="2209.1" cy="250.6" r="0.5" fill="#b6cfe6"/><circle cx="2052.7" cy="247.6" r="0.4" fill="#c2d6ea"/><circle cx="1665.7" cy="252.6" r="1.3" fill="#dbe8f5"/><circle cx="1859.7" cy="273.7" r="1.3" fill="#e6f0fa"/><circle cx="1671.5" cy="262.9" r="1.5" fill="#a9c2dc"/><circle cx="1882.8" cy="267.0" r="1.0" fill="#c2d6ea"/><circle cx="1766.7" cy="240.7" r="1.2" fill="#e6f0fa"/><circle cx="1770.1" cy="232.1" r="0.3" fill="#a9c2dc"/><circle cx="1856.2" cy="279.7" r="1.6" fill="#a9c2dc"/><circle cx="1710.8" cy="266.8" r="1.8" fill="#dbe8f5"/><circle cx="2096.7" cy="265.4" r="1.5" fill="#dbe8f5"/><circle cx="1946.9" cy="274.3" r="1.4" fill="#e6f0fa"/><circle cx="1723.5" cy="272.0" r="0.4" fill="#b6cfe6"/><circle cx="1965.5" cy="264.9" r="0.9" fill="#b6cfe6"/><circle cx="1837.4" cy="276.8" r="0.3" fill="#b6cfe6"/><circle cx="2028.3" cy="275.8" r="1.8" fill="#dbe8f5"/><circle cx="1813.1" cy="229.5" r="1.9" fill="#dbe8f5"/><circle cx="1935.0" cy="268.3" r="0.5" fill="#b6cfe6"/><circle cx="2178.4" cy="227.8" r="0.8" fill="#dbe8f5"/><circle cx="1744.7" cy="228.8" r="1.9" fill="#c2d6ea"/><circle cx="1902.1" cy="267.4" r="1.8" fill="#a9c2dc"/><circle cx="1852.3" cy="248.6" r="0.9" fill="#e6f0fa"/><circle cx="2196.6" cy="247.3" r="0.7" fill="#e6f0fa"/><circle cx="2126.1" cy="284.0" r="1.0" fill="#dbe8f5"/><circle cx="2075.8" cy="265.8" r="1.1" fill="#e6f0fa"/><circle cx="1730.8" cy="248.9" r="1.7" fill="#c2d6ea"/><circle cx="1696.1" cy="270.4" r="1.8" fill="#dbe8f5"/><circle cx="2187.6" cy="260.4" r="1.7" fill="#c2d6ea"/><circle cx="1794.7" cy="236.3" r="1.2" fill="#a9c2dc"/><circle cx="2178.5" cy="276.8" r="1.2" fill="#a9c2dc"/><circle cx="2027.0" cy="277.0" r="1.3" fill="#dbe8f5"/><circle cx="1977.2" cy="240.6" r="0.6" fill="#b6cfe6"/><circle cx="1795.2" cy="273.9" r="0.6" fill="#dbe8f5"/><circle cx="1848.3" cy="244.0" r="1.5" fill="#c2d6ea"/><circle cx="1881.6" cy="267.2" r="1.4" fill="#c2d6ea"/><circle cx="1910.1" cy="275.7" r="1.6" fill="#dbe8f5"/><circle cx="1657.0" cy="285.6" r="0.4" fill="#e6f0fa"/><circle cx="2091.3" cy="278.7" r="0.4" fill="#c2d6ea"/><circle cx="2153.3" cy="264.2" r="1.5" fill="#b6cfe6"/><circle cx="2192.3" cy="276.9" r="0.7" fill="#c2d6ea"/><circle cx="2087.1" cy="232.5" r="1.3" fill="#b6cfe6"/><circle cx="2158.4" cy="239.8" r="1.7" fill="#a9c2dc"/><circle cx="1746.4" cy="229.6" r="1.6" fill="#b6cfe6"/><circle cx="1694.3" cy="275.7" r="0.8" fill="#a9c2dc"/><circle cx="1901.1" cy="269.5" r="0.8" fill="#b6cfe6"/><circle cx="1833.5" cy="251.0" r="1.1" fill="#c2d6ea"/><circle cx="2011.5" cy="270.0" r="1.1" fill="#c2d6ea"/><circle cx="1954.0" cy="231.4" r="0.7" fill="#e6f0fa"/><circle cx="1705.7" cy="279.0" r="1.8" fill="#b6cfe6"/><circle cx="1944.4" cy="267.4" r="1.4" fill="#a9c2dc"/><circle cx="2076.5" cy="242.3" r="1.4" fill="#a9c2dc"/><circle cx="1702.6" cy="282.6" r="0.8" fill="#dbe8f5"/><circle cx="1949.3" cy="231.0" r="1.1" fill="#a9c2dc"/><circle cx="1675.2" cy="242.3" r="1.5" fill="#c2d6ea"/><circle cx="2012.4" cy="269.3" r="0.5" fill="#a9c2dc"/><circle cx="2152.7" cy="264.6" r="0.5" fill="#dbe8f5"/><circle cx="1722.3" cy="244.6" r="1.5" fill="#dbe8f5"/><circle cx="1882.6" cy="242.6" r="0.6" fill="#e6f0fa"/><circle cx="1820.7" cy="234.9" r="0.4" fill="#c2d6ea"/><circle cx="2074.8" cy="257.7" r="1.5" fill="#a9c2dc"/><circle cx="1698.4" cy="240.8" r="0.4" fill="#c2d6ea"/><circle cx="1665.2" cy="255.3" r="0.7" fill="#dbe8f5"/><circle cx="1844.6" cy="244.6" r="0.9" fill="#dbe8f5"/><circle cx="2106.3" cy="228.3" r="1.1" fill="#b6cfe6"/><circle cx="1728.2" cy="260.6" r="1.4" fill="#dbe8f5"/><circle cx="2088.9" cy="269.1" r="0.6" fill="#c2d6ea"/><circle cx="1967.1" cy="265.5" r="0.9" fill="#c2d6ea"/><circle cx="1981.4" cy="233.1" r="0.9" fill="#c2d6ea"/><circle cx="1954.2" cy="234.6" r="0.6" fill="#a9c2dc"/><circle cx="1853.5" cy="242.2" r="1.6" fill="#e6f0fa"/><circle cx="2153.4" cy="282.9" r="0.9" fill="#dbe8f5"/><circle cx="2162.0" cy="243.2" r="1.1" fill="#dbe8f5"/><circle cx="2035.8" cy="242.6" r="1.7" fill="#e6f0fa"/><circle cx="1658.3" cy="235.8" r="1.3" fill="#b6cfe6"/><circle cx="2084.0" cy="265.0" r="1.1" fill="#dbe8f5"/><circle cx="2000.4" cy="236.3" r="1.6" fill="#c2d6ea"/><circle cx="1662.3" cy="255.0" r="1.3" fill="#e6f0fa"/><circle cx="1705.2" cy="241.6" r="1.4" fill="#c2d6ea"/><circle cx="1719.0" cy="273.1" r="1.3" fill="#b6cfe6"/><circle cx="1655.7" cy="262.3" r="1.1" fill="#e6f0fa"/><circle cx="1950.9" cy="281.6" r="0.8" fill="#a9c2dc"/><circle cx="2040.4" cy="232.3" r="1.7" fill="#dbe8f5"/><circle cx="2086.8" cy="226.1" r="0.4" fill="#a9c2dc"/><circle cx="2214.8" cy="236.7" r="0.4" fill="#c2d6ea"/><circle cx="1892.3" cy="270.9" r="1.1" fill="#b6cfe6"/><circle cx="2093.5" cy="249.3" r="1.7" fill="#c2d6ea"/><circle cx="1866.1" cy="253.3" r="0.4" fill="#e6f0fa"/><circle cx="1760.8" cy="254.3" r="0.3" fill="#e6f0fa"/><circle cx="2076.3" cy="248.9" r="0.6" fill="#b6cfe6"/><circle cx="2054.8" cy="246.7" r="0.9" fill="#dbe8f5"/><circle cx="1848.9" cy="248.9" r="1.9" fill="#c2d6ea"/><circle cx="1789.7" cy="246.9" r="1.7" fill="#dbe8f5"/><circle cx="1753.3" cy="237.0" r="0.6" fill="#e6f0fa"/><circle cx="1930.6" cy="263.5" r="0.5" fill="#dbe8f5"/><circle cx="1737.7" cy="254.4" r="0.4" fill="#b6cfe6"/><circle cx="1872.8" cy="243.7" r="0.4" fill="#b6cfe6"/><circle cx="1778.6" cy="226.4" r="1.1" fill="#c2d6ea"/><circle cx="1779.9" cy="248.1" r="0.6" fill="#a9c2dc"/><circle cx="1998.9" cy="245.5" r="0.5" fill="#b6cfe6"/><circle cx="2105.3" cy="242.0" r="1.9" fill="#e6f0fa"/><circle cx="2094.8" cy="283.6" r="1.1" fill="#dbe8f5"/><circle cx="1793.8" cy="274.5" r="1.3" fill="#a9c2dc"/><circle cx="1823.3" cy="227.5" r="1.0" fill="#b6cfe6"/><circle cx="1981.5" cy="224.2" r="0.3" fill="#b6cfe6"/><circle cx="1652.0" cy="255.2" r="1.1" fill="#c2d6ea"/><circle cx="2017.2" cy="279.8" r="0.6" fill="#e6f0fa"/><circle cx="1836.5" cy="253.7" r="0.9" fill="#b6cfe6"/><circle cx="1860.8" cy="270.6" r="1.3" fill="#e6f0fa"/><circle cx="1691.5" cy="242.2" r="1.7" fill="#b6cfe6"/><circle cx="1932.8" cy="257.9" r="1.2" fill="#e6f0fa"/><circle cx="1741.4" cy="269.9" r="1.5" fill="#dbe8f5"/><circle cx="1847.6" cy="235.4" r="1.6" fill="#e6f0fa"/><circle cx="1772.9" cy="272.3" r="1.1" fill="#a9c2dc"/><circle cx="2113.0" cy="255.4" r="1.5" fill="#e6f0fa"/><circle cx="2186.9" cy="226.6" r="0.6" fill="#b6cfe6"/><circle cx="2114.1" cy="229.7" r="1.4" fill="#b6cfe6"/><circle cx="1825.0" cy="261.2" r="1.6" fill="#b6cfe6"/><circle cx="2146.2" cy="278.1" r="1.0" fill="#a9c2dc"/><circle cx="2214.2" cy="224.1" r="0.6" fill="#b6cfe6"/><circle cx="1835.6" cy="243.3" r="1.0" fill="#c2d6ea"/><circle cx="1779.4" cy="227.0" r="0.5" fill="#c2d6ea"/><circle cx="1977.7" cy="224.7" r="0.7" fill="#c2d6ea"/><circle cx="1767.5" cy="258.9" r="1.0" fill="#dbe8f5"/><circle cx="1824.4" cy="278.7" r="1.6" fill="#e6f0fa"/><circle cx="1743.1" cy="228.9" r="1.6" fill="#b6cfe6"/><circle cx="1984.9" cy="277.3" r="0.5" fill="#a9c2dc"/><circle cx="1690.3" cy="252.8" r="0.7" fill="#dbe8f5"/><circle cx="1703.6" cy="254.1" r="1.4" fill="#a9c2dc"/><circle cx="1872.6" cy="265.0" r="1.5" fill="#a9c2dc"/><circle cx="2121.3" cy="260.9" r="1.6" fill="#c2d6ea"/><circle cx="1708.2" cy="224.5" r="0.8" fill="#b6cfe6"/><circle cx="1837.4" cy="235.9" r="1.5" fill="#dbe8f5"/><circle cx="2035.6" cy="246.6" r="1.6" fill="#b6cfe6"/><circle cx="1989.4" cy="237.3" r="0.9" fill="#b6cfe6"/><circle cx="1833.7" cy="250.7" r="0.4" fill="#c2d6ea"/><circle cx="1826.9" cy="270.5" r="0.6" fill="#c2d6ea"/><circle cx="2144.0" cy="285.2" r="1.3" fill="#dbe8f5"/><circle cx="2131.2" cy="246.8" r="0.6" fill="#dbe8f5"/><circle cx="2187.0" cy="254.0" r="1.5" fill="#e6f0fa"/><circle cx="1910.9" cy="260.4" r="0.4" fill="#b6cfe6"/><circle cx="1747.1" cy="229.9" r="1.5" fill="#a9c2dc"/><circle cx="1930.5" cy="227.8" r="1.1" fill="#c2d6ea"/><circle cx="2069.5" cy="241.1" r="1.0" fill="#a9c2dc"/><circle cx="1910.2" cy="236.2" r="1.6" fill="#c2d6ea"/><circle cx="1700.4" cy="242.6" r="1.0" fill="#b6cfe6"/><circle cx="1759.2" cy="254.2" r="1.6" fill="#a9c2dc"/><circle cx="2202.4" cy="284.7" r="1.7" fill="#a9c2dc"/><circle cx="2183.1" cy="250.7" r="1.8" fill="#e6f0fa"/><circle cx="1943.4" cy="257.6" r="0.9" fill="#a9c2dc"/><circle cx="1805.0" cy="252.7" r="1.7" fill="#a9c2dc"/><circle cx="2070.8" cy="281.7" r="1.1" fill="#b6cfe6"/><circle cx="1716.6" cy="256.9" r="1.2" fill="#c2d6ea"/><circle cx="2187.3" cy="224.1" r="1.9" fill="#e6f0fa"/><circle cx="1845.1" cy="283.9" r="0.9" fill="#dbe8f5"/><circle cx="1661.2" cy="235.5" r="0.3" fill="#e6f0fa"/><circle cx="2161.1" cy="275.8" r="1.3" fill="#b6cfe6"/><circle cx="1899.8" cy="240.2" r="1.4" fill="#e6f0fa"/><circle cx="1881.5" cy="240.1" r="0.4" fill="#e6f0fa"/><circle cx="1662.5" cy="285.8" r="0.6" fill="#dbe8f5"/><circle cx="1783.2" cy="232.4" r="1.5" fill="#e6f0fa"/><circle cx="1933.6" cy="275.5" r="1.2" fill="#a9c2dc"/><circle cx="1650.6" cy="226.8" r="1.1" fill="#b6cfe6"/><circle cx="2156.8" cy="280.2" r="1.0" fill="#dbe8f5"/><circle cx="1937.3" cy="247.0" r="1.3" fill="#a9c2dc"/><circle cx="1746.2" cy="266.4" r="1.9" fill="#dbe8f5"/><circle cx="1699.4" cy="272.0" r="1.0" fill="#a9c2dc"/><circle cx="2102.7" cy="252.1" r="1.8" fill="#c2d6ea"/><circle cx="1972.9" cy="232.7" r="0.4" fill="#e6f0fa"/><circle cx="2130.4" cy="275.3" r="1.8" fill="#dbe8f5"/><circle cx="1798.2" cy="243.6" r="1.3" fill="#b6cfe6"/><circle cx="1921.4" cy="241.4" r="1.4" fill="#a9c2dc"/><circle cx="1699.9" cy="265.5" r="0.9" fill="#dbe8f5"/><circle cx="1921.0" cy="270.7" r="1.6" fill="#e6f0fa"/><circle cx="1753.2" cy="281.1" r="0.6" fill="#e6f0fa"/><circle cx="2182.4" cy="248.6" r="0.4" fill="#c2d6ea"/><circle cx="2187.2" cy="282.5" r="0.8" fill="#e6f0fa"/><circle cx="1960.2" cy="226.2" r="1.0" fill="#e6f0fa"/><circle cx="2204.6" cy="228.9" r="0.7" fill="#c2d6ea"/><circle cx="2065.0" cy="267.3" r="0.5" fill="#b6cfe6"/><circle cx="2003.9" cy="274.7" r="0.3" fill="#a9c2dc"/><circle cx="2201.3" cy="266.9" r="1.0" fill="#e6f0fa"/><circle cx="1906.5" cy="241.9" r="1.2" fill="#c2d6ea"/><circle cx="1776.7" cy="283.4" r="0.5" fill="#c2d6ea"/><circle cx="2037.8" cy="253.0" r="0.9" fill="#b6cfe6"/><circle cx="1722.8" cy="227.4" r="1.5" fill="#c2d6ea"/><circle cx="1819.8" cy="264.2" r="0.5" fill="#c2d6ea"/><circle cx="1669.1" cy="283.6" r="1.2" fill="#e6f0fa"/><circle cx="2088.8" cy="250.9" r="0.6" fill="#b6cfe6"/><circle cx="1802.4" cy="232.1" r="0.5" fill="#c2d6ea"/><circle cx="1861.6" cy="282.1" r="1.3" fill="#c2d6ea"/><circle cx="1645.3" cy="247.0" r="0.5" fill="#e6f0fa"/><circle cx="1782.4" cy="246.0" r="1.8" fill="#e6f0fa"/>
<path d="M1655,238 q15,-8 32,0 v22 q0,14 -16,20 q-16,-6 -16,-20z" fill="#dae8f5" stroke="#555" stroke-width="2"/>
<path d="M1671,244v34 M1656,258h30" stroke="#555" stroke-width="1"/>
<path d="M1660,246q4,-3 8,0v8h-8z M1675,246h8v8h-8z M1660,262q5,-2 9,4v6h-9z M1675,264h8v6h-8z" fill="#666"/>
<path d="M1662,237h18" stroke="#555" stroke-width="3"/>
<g font-family="Liberation Serif" font-weight="bold" fill="#3b78c2" text-anchor="middle" style="font-variant:small-caps">
<text x="1929" y="244" font-size="17.5" letter-spacing="0.3">City of Aiken 2007</text>
<text x="1929" y="262" font-size="17.5" letter-spacing="0.3">System Number 0210001</text>
<text x="1929" y="280" font-size="17.5" letter-spacing="0.3">Annual Drinking Water Quality Report</text>
</g>
<path d="M1817.5,296V957 M1995.5,296V957" stroke="#c8c8c8" stroke-width="1"/>
<!-- faucet -->
<g fill="#fff" stroke="#4a4a4a" stroke-width="1.8" stroke-linejoin="round">
<path d="M2130,318 q-2,-9 10,-10 q11,0 22,3 q11,-3 22,-3 q12,1 11,10 q-2,7 -13,5 q-10,-2 -20,-1 q-10,-1 -20,1 q-10,2 -12,-5z"/>
<rect x="2157" y="324" width="13" height="10"/>
<rect x="2149" y="333" width="30" height="9" rx="2"/>
<path d="M2146,345 h38 q33,0 33,28 v11 h-18 v-8 q0,-10 -12,-10 h-41z"/>
<path d="M2127,356 l7,-12 h13 l4,16 l-4,22 h-13 l-7,-12z" stroke-width="2.2"/>
<path d="M2133,350 v26" stroke-width="1"/>
</g>
<circle cx="2162" cy="309" r="3" fill="#4a4a4a"/>
<path d="M2204,386 q4,18 14,30 a16,16 0 1 1 -30,6 q10,-12 16,-36z" fill="#a9cdf0" stroke="#555" stroke-width="2"/>
<path d="M2208,414l5,-3l2,6l-5,2z" fill="#fff" stroke="#555" stroke-width="0.8"/>
<path d="M2176,616 q2,6 6,10 a6.5,6.5 0 1 1 -12,0 q4,-4 6,-10z" fill="#a9cdf0" stroke="#5a7a9a" stroke-width="1.1"/><path d="M2196,638 q2,6 6,10 a6.5,6.5 0 1 1 -12,0 q4,-4 6,-10z" fill="#a9cdf0" stroke="#5a7a9a" stroke-width="1.1"/><path d="M2181,667 q2,6 6,10 a6.5,6.5 0 1 1 -12,0 q4,-4 6,-10z" fill="#a9cdf0" stroke="#5a7a9a" stroke-width="1.1"/><path d="M2205,692 q2,6 6,10 a6.5,6.5 0 1 1 -12,0 q4,-4 6,-10z" fill="#a9cdf0" stroke="#5a7a9a" stroke-width="1.1"/><path d="M2188,718 q2,6 6,10 a6.5,6.5 0 1 1 -12,0 q4,-4 6,-10z" fill="#a9cdf0" stroke="#5a7a9a" stroke-width="1.1"/><path d="M2206,739 q2,6 6,10 a6.5,6.5 0 1 1 -12,0 q4,-4 6,-10z" fill="#a9cdf0" stroke="#5a7a9a" stroke-width="1.1"/><path d="M2192,767 q2,6 6,10 a6.5,6.5 0 1 1 -12,0 q4,-4 6,-10z" fill="#a9cdf0" stroke="#5a7a9a" stroke-width="1.1"/><path d="M2206,789 q2,6 6,10 a6.5,6.5 0 1 1 -12,0 q4,-4 6,-10z" fill="#a9cdf0" stroke="#5a7a9a" stroke-width="1.1"/><path d="M2189,813 q2,6 6,10 a6.5,6.5 0 1 1 -12,0 q4,-4 6,-10z" fill="#a9cdf0" stroke="#5a7a9a" stroke-width="1.1"/><path d="M2207,836 q2,6 6,10 a6.5,6.5 0 1 1 -12,0 q4,-4 6,-10z" fill="#a9cdf0" stroke="#5a7a9a" stroke-width="1.1"/><path d="M2192,863 q2,6 6,10 a6.5,6.5 0 1 1 -12,0 q4,-4 6,-10z" fill="#a9cdf0" stroke="#5a7a9a" stroke-width="1.1"/><path d="M2184,446 q2,6 6,10 a6.5,6.5 0 1 1 -12,0 q4,-4 6,-10z" fill="#a9cdf0" stroke="#5a7a9a" stroke-width="1.1"/><path d="M2172,468 q2,6 6,10 a6.5,6.5 0 1 1 -12,0 q4,-4 6,-10z" fill="#a9cdf0" stroke="#5a7a9a" stroke-width="1.1"/><path d="M2189,489 q2,6 6,10 a6.5,6.5 0 1 1 -12,0 q4,-4 6,-10z" fill="#a9cdf0" stroke="#5a7a9a" stroke-width="1.1"/><path d="M2172,513 q2,6 6,10 a6.5,6.5 0 1 1 -12,0 q4,-4 6,-10z" fill="#a9cdf0" stroke="#5a7a9a" stroke-width="1.1"/><path d="M2190,535 q2,6 6,10 a6.5,6.5 0 1 1 -12,0 q4,-4 6,-10z" fill="#a9cdf0" stroke="#5a7a9a" stroke-width="1.1"/><path d="M2175,564 q2,6 6,10 a6.5,6.5 0 1 1 -12,0 q4,-4 6,-10z" fill="#a9cdf0" stroke="#5a7a9a" stroke-width="1.1"/><path d="M2193,591 q2,6 6,10 a6.5,6.5 0 1 1 -12,0 q4,-4 6,-10z" fill="#a9cdf0" stroke="#5a7a9a" stroke-width="1.1"/>
<!-- glass -->
<path d="M2166,893 h51 l-2,22 q-6,10 -3,20 l-1,22 h-40 l-1,-22 q3,-10 -3,-20z" fill="#fff" stroke="#555" stroke-width="1.6"/>
<path d="M2169,904 h45 l-2,12 q-5,10 -2,20 l-1,21 h-36 l-1,-21 q3,-10 -3,-20z" fill="#9cc6f0"/>
<path d="M2208,913 q-10,12 -14,24 v20 h4 v-18 q6,-10 12,-14z" fill="#555"/>
</svg>

<style>
.dl{position:absolute;white-space:nowrap;font-size:9.9px;line-height:13px;color:#575757;transform-origin:0 0;letter-spacing:0}
.dl.j{text-align:justify;text-align-last:justify;white-space:normal;height:13px;overflow:visible}
.dl i.h{font-style:normal;background:linear-gradient(transparent 28%,#bcd5f0 28%,#bcd5f0 94%,transparent 94%);color:#1d3a6e}
.dl b.bi{font-style:italic;font-weight:bold;color:#5c5c5c}
.dl b{font-weight:bold}
.dl sup{font-size:7px;vertical-align:top;line-height:7px}
</style><div style="position:absolute;left:0;top:0;width:2335px;height:1100px;filter:blur(0.3px)"><div class="dl j" style="left:1643px;top:301.5px;width:170.9px;transform:scaleX(0.983);">The City of Aiken is pleased to present</div>
<div class="dl j" style="left:1643px;top:313.6px;width:171.1px;transform:scaleX(0.982);">to you the 2007 Annual Drinking <i class="h">Water</i></div>
<div class="dl j" style="left:1643px;top:325.8px;width:170.7px;transform:scaleX(0.984);">Quality Report. This report is designed</div>
<div class="dl j" style="left:1643px;top:337.9px;width:172.6px;transform:scaleX(0.973);">to inform you about the quality of <i class="h">water</i></div>
<div class="dl j" style="left:1643px;top:350.1px;width:182.3px;transform:scaleX(0.922);">and services we deliver to you every day.</div>
<div class="dl j" style="left:1643px;top:362.2px;width:175.3px;transform:scaleX(0.958);">Our constant goal is to provide you with</div>
<div class="dl j" style="left:1643px;top:374.4px;width:182.5px;transform:scaleX(0.920);">a safe and dependable supply of drinking</div>
<div class="dl j" style="left:1643px;top:386.6px;width:168px;"><i class="h">water</i>. We want you to understand the</div>
<div class="dl j" style="left:1643px;top:398.7px;width:170.2px;transform:scaleX(0.987);">efforts we make to continually improve</div>
<div class="dl j" style="left:1643px;top:410.9px;width:177.0px;transform:scaleX(0.949);">the <i class="h">water</i> treatment process and protect</div>
<div class="dl j" style="left:1643px;top:423.0px;width:175.1px;transform:scaleX(0.959);">our <i class="h">water</i> resources. We are committed</div>
<div class="dl" style="left:1643px;top:435.1px;width:168px;">to ensuring the quality of your <i class="h">water</i>.</div>
<div class="dl j" style="left:1643px;top:459.5px;width:168px;">The City of Aiken&#x27;s <i class="h">water</i> comes from</div>
<div class="dl j" style="left:1643px;top:471.6px;width:168px;">several different sources.  One is a</div>
<div class="dl j" style="left:1643px;top:483.8px;width:168px;">surface <i class="h">water</i> source that comes from</div>
<div class="dl j" style="left:1643px;top:495.9px;width:174.8px;transform:scaleX(0.961);">Shaws Creek, another is a spring <i class="h">water</i></div>
<div class="dl j" style="left:1643px;top:508.0px;width:174.8px;transform:scaleX(0.961);">source that comes from Shiloh Springs,</div>
<div class="dl j" style="left:1643px;top:520.2px;width:168px;">and the other two sources are from</div>
<div class="dl j" style="left:1643px;top:532.4px;width:180.1px;transform:scaleX(0.933);">wells on Pine Log Road and Town Creek</div>
<div class="dl j" style="left:1643px;top:544.5px;width:168px;">Road.  These two wells draw from the</div>
<div class="dl" style="left:1643px;top:556.6px;width:168px;">Tuscaloosa Aquifer.</div>
<div class="dl j" style="left:1643px;top:581.0px;width:168px;">The City of Aiken routinely monitors</div>
<div class="dl j" style="left:1643px;top:593.1px;width:177.9px;transform:scaleX(0.944);">these different sources for contaminants</div>
<div class="dl j" style="left:1643px;top:605.2px;width:168px;">according to Federal and State laws.</div>
<div class="dl j" style="left:1643px;top:617.4px;width:168px;">Based on these test results, <b class="bi">the City</b></div>
<div class="dl j" style="left:1643px;top:629.5px;width:170.5px;transform:scaleX(0.985);"><b class="bi">of Aiken is pleased to announce the</b></div>
<div class="dl j" style="left:1643px;top:641.7px;width:168px;"><b class="bi">drinking </b><i class="h">water</i><b class="bi"> is safe and meets all</b></div>
<div class="dl j" style="left:1643px;top:653.9px;width:172.4px;transform:scaleX(0.975);"><b class="bi">Federal and State requirements.</b> The</div>
<div class="dl j" style="left:1643px;top:666.0px;width:170.4px;transform:scaleX(0.986);">results of our monitoring for the Period</div>
<div class="dl j" style="left:1643px;top:678.2px;width:168px;">of January 1<sup>st</sup> to December 31<sup>st</sup>, 2007</div>
<div class="dl" style="left:1643px;top:690.3px;width:168px;">are shown on the back of this page.</div>
<div class="dl j" style="left:1643px;top:714.6px;width:168px;">As <i class="h">water</i> travels over the land or</div>
<div class="dl j" style="left:1643px;top:726.8px;width:174.2px;transform:scaleX(0.964);">underground, it can pick up substances</div>
<div class="dl j" style="left:1643px;top:738.9px;width:168px;">or contaminants such as microbes,</div>
<div class="dl j" style="left:1643px;top:751.0px;width:168px;">inorganic and organic chemicals, and</div>
<div class="dl j" style="left:1643px;top:763.2px;width:168px;">radioactive substances.  All drinking</div>
<div class="dl j" style="left:1643px;top:775.4px;width:168px;"><i class="h">water</i>, including bottled drinking</div>
<div class="dl j" style="left:1643px;top:787.5px;width:168px;"><i class="h">water</i>, may be reasonably expected</div>
<div class="dl j" style="left:1643px;top:799.7px;width:168px;">to contain at least small amounts of</div>
<div class="dl j" style="left:1643px;top:811.8px;width:168px;">some contaminants.  It&#x27;s important to</div>
<div class="dl j" style="left:1643px;top:824.0px;width:168px;">remember that the presence of these</div>
<div class="dl j" style="left:1643px;top:836.1px;width:178.1px;transform:scaleX(0.943);">contaminants does not necessarily pose</div>
<div class="dl" style="left:1643px;top:848.2px;width:168px;">a health risk.</div>
<div class="dl j" style="left:1643px;top:872.6px;width:174.2px;transform:scaleX(0.964);">In the information on this report you will</div>
<div class="dl j" style="left:1643px;top:884.7px;width:172.0px;transform:scaleX(0.977);">find many terms and abbreviations you</div>
<div class="dl j" style="left:1643px;top:896.9px;width:168px;">might not be familiar with. To help you</div>
<div class="dl j" style="left:1643px;top:909.0px;width:173.7px;transform:scaleX(0.967);">better understand these terms we have</div>
<div class="dl" style="left:1643px;top:921.1px;width:168px;">provided the following definitions:</div>
<div class="dl j" style="left:1643px;top:945.5px;width:175.3px;transform:scaleX(0.958);"><b class="bi">Non-Detects (ND)</b>  Laboratory analysis</div>
<div class="dl j" style="left:1823px;top:301.5px;width:174.2px;transform:scaleX(0.959);"><b class="bi">Parts per million (ppm) or Milligrams</b></div>
<div class="dl j" style="left:1823px;top:313.6px;width:167px;"><b class="bi">per liter (mg/l)</b>  One part per million</div>
<div class="dl j" style="left:1823px;top:325.8px;width:174.8px;transform:scaleX(0.955);">corresponds to one minute in two years</div>
<div class="dl" style="left:1823px;top:337.9px;width:167px;">or a single penny in $10,000.</div>
<div class="dl j" style="left:1823px;top:362.2px;width:175.8px;transform:scaleX(0.950);"><b class="bi">Parts per billion (ppb) or Micrograms</b></div>
<div class="dl j" style="left:1823px;top:374.4px;width:181.9px;transform:scaleX(0.918);"><b class="bi">per liter</b> One part per billion corresponds</div>
<div class="dl j" style="left:1823px;top:386.6px;width:178.1px;transform:scaleX(0.938);">to one minute in 2,000 years, or a single</div>
<div class="dl" style="left:1823px;top:398.7px;width:167px;">penny in $10,000,000.</div>
<div class="dl j" style="left:1823px;top:423.0px;width:176.4px;transform:scaleX(0.947);"><b class="bi">Picocuries per liter (pCi/L)</b>  Picocuries</div>
<div class="dl j" style="left:1823px;top:435.1px;width:177.0px;transform:scaleX(0.944);">per liter is a measure of the radioactivity</div>
<div class="dl" style="left:1823px;top:447.3px;width:167px;">in <i class="h">water</i>.</div>
<div class="dl j" style="left:1823px;top:471.6px;width:170.7px;transform:scaleX(0.978);"><b class="bi">Action Level (AL)</b>   The concentration</div>
<div class="dl j" style="left:1823px;top:483.8px;width:167px;">of a contaminant which, if exceeded,</div>
<div class="dl j" style="left:1823px;top:495.9px;width:177.0px;transform:scaleX(0.944);">triggers treatment or other requirements</div>
<div class="dl" style="left:1823px;top:508.0px;width:167px;">which a <i class="h">water</i> system must follow.</div>
<div class="dl j" style="left:1823px;top:532.4px;width:167px;"><b class="bi">Maximum Contaminant Level</b>  The</div>
<div class="dl j" style="left:1823px;top:544.5px;width:180.1px;transform:scaleX(0.927);">&quot;Maximum Allowed&quot; (MCL) is the highest</div>
<div class="dl j" style="left:1823px;top:556.6px;width:174.2px;transform:scaleX(0.958);">level of a contaminant that is allowed in</div>
<div class="dl j" style="left:1823px;top:568.8px;width:169.8px;transform:scaleX(0.983);">drinking <i class="h">water</i>.  MCLs are set as close</div>
<div class="dl j" style="left:1823px;top:581.0px;width:177.5px;transform:scaleX(0.941);">to the MCLGs as feasible using the best</div>
<div class="dl" style="left:1823px;top:593.1px;width:167px;">available treatment technology.</div>
<div class="dl j" style="left:1823px;top:617.4px;width:167px;"><b class="bi">Maximum Contaminant Level Goal</b></div>
<div class="dl j" style="left:1823px;top:629.5px;width:167px;">The &quot;Goal&quot; (MCLG) is the level of a</div>
<div class="dl j" style="left:1823px;top:641.7px;width:167px;">contaminant in drinking <i class="h">water</i> below</div>
<div class="dl j" style="left:1823px;top:653.9px;width:167px;">which there is no known or expected</div>
<div class="dl j" style="left:1823px;top:666.0px;width:178.1px;transform:scaleX(0.938);">risk to health. MCLGs allow for a margin</div>
<div class="dl" style="left:1823px;top:678.2px;width:167px;">of safety.</div>
<div class="dl j" style="left:1823px;top:702.5px;width:179.1px;transform:scaleX(0.932);"><b class="bi">Maximum Residual Disinfection Level</b></div>
<div class="dl j" style="left:1823px;top:714.6px;width:171.8px;transform:scaleX(0.972);"><b class="bi">Goal (MRDLG)</b>  The level of a drinking</div>
<div class="dl j" style="left:1823px;top:726.8px;width:170.9px;transform:scaleX(0.977);"><i class="h">water</i> disinfectant below which there is</div>
<div class="dl j" style="left:1823px;top:738.9px;width:167px;">no known or expected risk to health.</div>
<div class="dl j" style="left:1823px;top:751.0px;width:167px;">MRDLG&#x27;s do not reflect the benefits</div>
<div class="dl j" style="left:1823px;top:763.2px;width:167px;">of the use of disinfectants to control</div>
<div class="dl" style="left:1823px;top:775.4px;width:167px;">microbial contaminants.</div>
<div class="dl j" style="left:1823px;top:799.7px;width:167px;"><b class="bi">Maximum Residual Disinfection</b></div>
<div class="dl j" style="left:1823px;top:811.8px;width:167px;"><b class="bi">Level (MRDL)</b>  The highest level of a</div>
<div class="dl j" style="left:1823px;top:824.0px;width:167px;">disinfectant allowed in drinking <i class="h">water</i>.</div>
<div class="dl j" style="left:1823px;top:836.1px;width:167px;">There is convincing evidence that the</div>
<div class="dl j" style="left:1823px;top:848.2px;width:180.8px;transform:scaleX(0.923);">addition of a disinfectant is necessary for</div>
<div class="dl" style="left:1823px;top:860.4px;width:167px;">the control of microbial contaminants.</div>
<div class="dl" style="left:1823px;top:884.7px;width:167px;"><b class="bi">TT</b>  Treatment Technique</div>
<div class="dl j" style="left:1823px;top:909.0px;width:167px;">MCL&#x27;s are set at very stringent levels.</div>
<div class="dl j" style="left:1823px;top:921.1px;width:167px;">To understand the possible health</div>
<div class="dl j" style="left:1823px;top:933.3px;width:167px;">effects described for many regulated</div>
<div class="dl j" style="left:1823px;top:945.5px;width:167px;">constituents, a person would have to</div>
<div class="dl" style="left:2002px;top:301.5px;width:118px;">a-million chance of having</div>
<div class="dl" style="left:2002px;top:313.6px;width:120.7px;transform:scaleX(0.978);">the described health effect.</div>
<div class="dl j" style="left:2002px;top:337.9px;width:118px;">As you can see by the</div>
<div class="dl j" style="left:2002px;top:350.1px;width:118px;">table, the City of Aiken&#x27;s</div>
<div class="dl j" style="left:2002px;top:362.2px;width:118px;"><i class="h">water</i> system had <b>NO</b></div>
<div class="dl j" style="left:2002px;top:374.4px;width:127.1px;transform:scaleX(0.929);"><b>VIOLATIONS</b>. We are proud</div>
<div class="dl j" style="left:2002px;top:386.6px;width:118px;">that your drinking <i class="h">water</i></div>
<div class="dl j" style="left:2002px;top:398.7px;width:129.1px;transform:scaleX(0.914);">meets or exceeds all Federal</div>
<div class="dl j" style="left:2002px;top:410.9px;width:118px;">and State requirements.</div>
<div class="dl j" style="left:2002px;top:423.0px;width:118px;">We have learned through</div>
<div class="dl j" style="left:2002px;top:435.1px;width:153px;">our monitoring and testing</div>
<div class="dl j" style="left:2002px;top:447.3px;width:153px;">that some constituents have been</div>
<div class="dl j" style="left:2002px;top:459.5px;width:153px;">detected. The EPA has determined</div>
<div class="dl j" style="left:2002px;top:471.6px;width:153px;">that your <i class="h">water</i> <b>IS SAFE</b> at these</div>
<div class="dl" style="left:2002px;top:483.8px;width:153px;">levels.</div>
<div class="dl j" style="left:2002px;top:508.0px;width:153px;">All sources of drinking <i class="h">water</i> are</div>
<div class="dl j" style="left:2002px;top:520.2px;width:153px;">subject to potential contamination</div>
<div class="dl j" style="left:2002px;top:532.4px;width:153px;">by substances that are naturally</div>
<div class="dl j" style="left:2002px;top:544.5px;width:153px;">occurring or man made.  These</div>
<div class="dl j" style="left:2002px;top:556.6px;width:153px;">substances can be microbes,</div>
<div class="dl j" style="left:2002px;top:568.8px;width:153px;">inorganic or organic chemicals and</div>
<div class="dl j" style="left:2002px;top:581.0px;width:158.8px;transform:scaleX(0.963);">radioactive substances.  All drinking</div>
<div class="dl j" style="left:2002px;top:593.1px;width:153px;"><i class="h">water</i>, including bottled <i class="h">water</i>, may</div>
<div class="dl j" style="left:2002px;top:605.2px;width:153px;">reasonably be expected to contain</div>
<div class="dl j" style="left:2002px;top:617.4px;width:153px;">at least small amounts of some</div>
<div class="dl j" style="left:2002px;top:629.5px;width:153px;">contaminates.  The presence of</div>
<div class="dl j" style="left:2002px;top:641.7px;width:153px;">contaminants does not necessarily</div>
<div class="dl j" style="left:2002px;top:653.9px;width:153px;">indicate that the <i class="h">water</i> poses a</div>
<div class="dl j" style="left:2002px;top:666.0px;width:157.2px;transform:scaleX(0.974);">health risk.  More information about</div>
<div class="dl j" style="left:2002px;top:678.2px;width:153px;">contaminants and potential health</div>
<div class="dl j" style="left:2002px;top:690.3px;width:164.7px;transform:scaleX(0.929);">effects can be obtained by calling the</div>
<div class="dl j" style="left:2002px;top:702.5px;width:153px;">Environmental Protection Agency&#x27;s</div>
<div class="dl" style="left:2002px;top:714.6px;width:153px;">Safe Drinking <i class="h">Water</i> Hotline at</div>
<div class="dl" style="left:2002px;top:726.8px;width:153px;">1-800-426-4791.</div>
<div class="dl j" style="left:2002px;top:751.0px;width:169.3px;transform:scaleX(0.904);">Some people may be more vulnerable</div>
<div class="dl j" style="left:2002px;top:763.2px;width:153px;">to contaminants in drinking <i class="h">water</i></div>
<div class="dl j" style="left:2002px;top:775.4px;width:153px;">than the general population.</div>
<div class="dl j" style="left:2002px;top:787.5px;width:158.8px;transform:scaleX(0.963);">Immunocompromised persons such</div>
<div class="dl j" style="left:2002px;top:799.7px;width:155.5px;transform:scaleX(0.984);">as persons with cancer undergoing</div>
<div class="dl j" style="left:2002px;top:811.8px;width:153px;">chemotherapy, persons who have</div>
<div class="dl j" style="left:2002px;top:824.0px;width:163.8px;transform:scaleX(0.934);">undergone organ transplants, people</div>
<div class="dl j" style="left:2002px;top:836.1px;width:153px;">with HIV/AIDS or other immune</div>
<div class="dl j" style="left:2002px;top:848.2px;width:159.7px;transform:scaleX(0.958);">system disorders, some elderly, and</div>
<div class="dl j" style="left:2002px;top:860.4px;width:153px;">infants can be particularly at risk</div>
<div class="dl j" style="left:2002px;top:872.6px;width:163.6px;transform:scaleX(0.935);">from infections. These people should</div>
<div class="dl j" style="left:2002px;top:884.7px;width:153px;">seek advice about drinking <i class="h">water</i></div>
<div class="dl j" style="left:2002px;top:896.9px;width:153px;">from their health care providers.</div>
<div class="dl j" style="left:2002px;top:909.0px;width:159.2px;transform:scaleX(0.961);">EPA/CDC guidelines on appropriate</div>
<div class="dl j" style="left:2002px;top:921.1px;width:159.4px;transform:scaleX(0.960);">means to lessen the risk of infection</div>
<div class="dl j" style="left:2002px;top:933.3px;width:159.9px;transform:scaleX(0.957);">by cryptosporidium and other micro-</div>
<div class="dl j" style="left:2002px;top:945.5px;width:163.8px;transform:scaleX(0.934);">biological contaminants are available</div></div>
</body></html>
